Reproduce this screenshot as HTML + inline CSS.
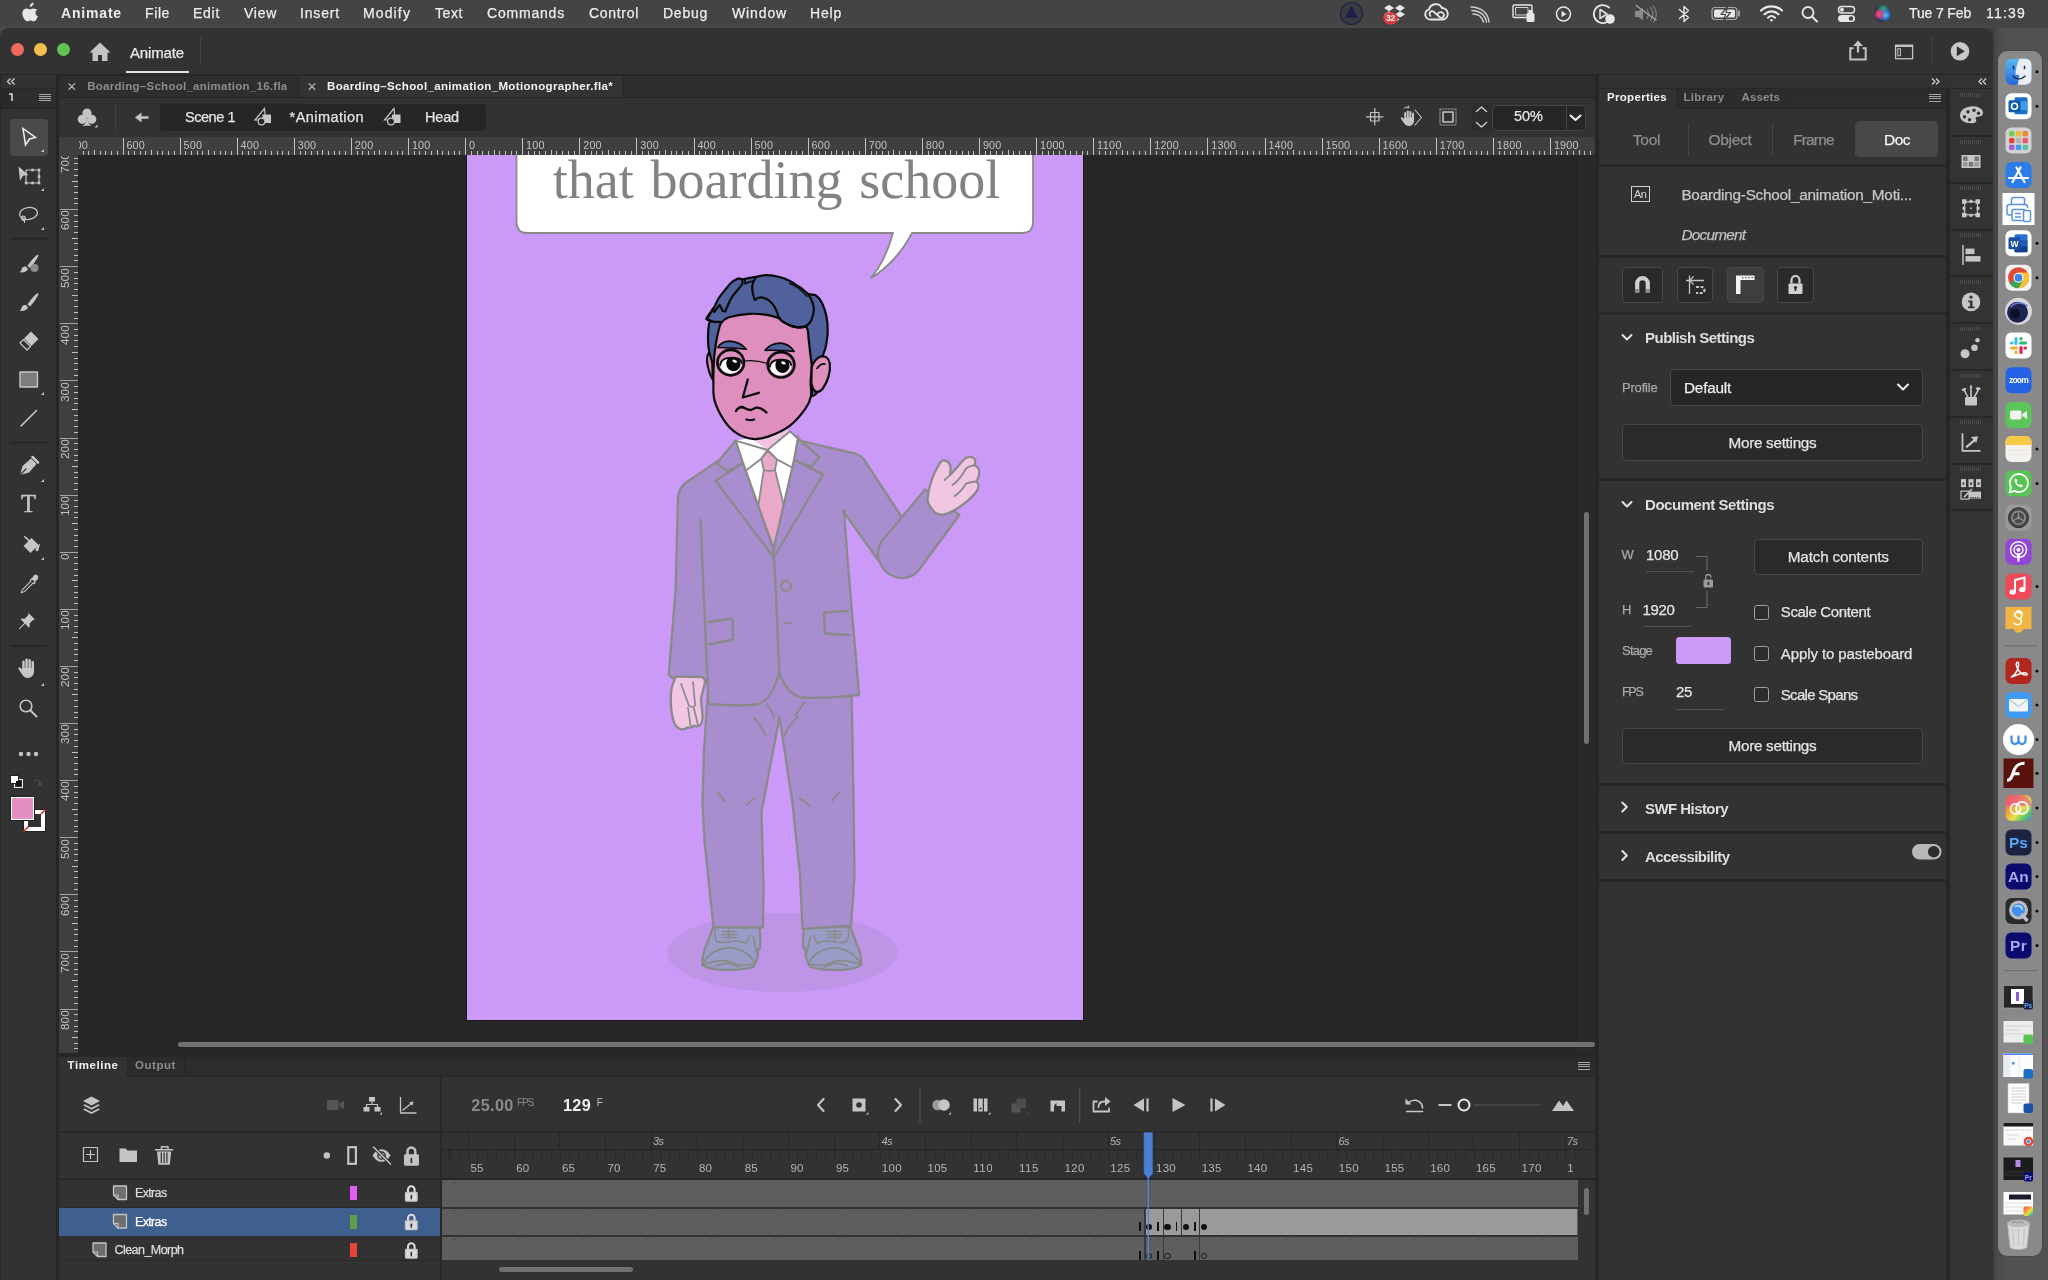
<!DOCTYPE html>
<html lang="en"><head><meta charset="utf-8"><title>Animate</title>
<style>
html,body{margin:0;padding:0;background:#484848;}
body{width:2048px;height:1280px;position:relative;overflow:hidden;font-family:"Liberation Sans",sans-serif;}
#root{position:absolute;left:0;top:0;width:2048px;height:1280px;will-change:transform;}
.b,.t,svg.a{position:absolute;}
.b{box-sizing:border-box;}
.t{white-space:nowrap;}
svg{overflow:visible;}
</style></head>
<body>
<div id="root">
<!-- p_frame -->
<div class="b" style="left:1985px;top:28px;width:63px;height:1252px;background:linear-gradient(90deg,#3e3e3e 8px,#4a4a4a 12px,#515151 20px);"></div>
<div class="b" style="left:0px;top:28px;width:1993px;height:1252px;background:#323232;border-radius:9px 9px 0 0;"></div>
<div class="b" style="left:0px;top:74px;width:1993px;height:1px;background:#262626;"></div>
<!-- p_menubar -->
<div class="b" style="left:0px;top:0px;width:2048px;height:28px;background:#444444;"></div>
<div class="b" style="left:0px;top:27px;width:2048px;height:1px;background:#494949;"></div>
<svg class="a" style="left:21px;top:2px" width="18" height="22" viewBox="0 0 18 22"><path fill="#e6e6e6" d="M12.6 0.6c0.1 1.1-0.3 2.2-1 3-0.7 0.8-1.7 1.4-2.8 1.3-0.1-1.1 0.4-2.2 1-2.9 0.7-0.8 1.9-1.4 2.8-1.4zM16.4 7.4c-1.2 0.7-1.9 1.9-1.9 3.3 0 1.6 0.9 3 2.4 3.6-0.3 0.9-0.7 1.8-1.3 2.6-0.8 1.2-1.7 2.4-3 2.4-1.3 0-1.7-0.8-3.2-0.8-1.5 0-2 0.8-3.2 0.8-1.3 0-2.2-1.1-3-2.3C1.5 14.600 0.600 11.200 2 8.800c0.800-1.400 2.200-2.200 3.700-2.200 1.300 0 2.400 0.800 3.200 0.800 0.700 0 2.100-1 3.700-0.900 1.500 0.050 2.900 0.700 3.800 1.900z"/></svg>
<span class="t" style="left:61.0px;top:6.3px;font-size:14px;line-height:14px;color:#ececec;letter-spacing:0.82px;font-weight:bold;">Animate</span>
<span class="t" style="left:145.0px;top:6.3px;font-size:14px;line-height:14px;color:#ececec;letter-spacing:0.61px;-webkit-text-stroke:0.250px;">File</span>
<span class="t" style="left:193.0px;top:6.3px;font-size:14px;line-height:14px;color:#ececec;letter-spacing:0.72px;-webkit-text-stroke:0.250px;">Edit</span>
<span class="t" style="left:244.0px;top:6.3px;font-size:14px;line-height:14px;color:#ececec;letter-spacing:0.73px;-webkit-text-stroke:0.250px;">View</span>
<span class="t" style="left:300.0px;top:6.3px;font-size:14px;line-height:14px;color:#ececec;letter-spacing:0.83px;-webkit-text-stroke:0.250px;">Insert</span>
<span class="t" style="left:363.0px;top:6.3px;font-size:14px;line-height:14px;color:#ececec;letter-spacing:1.13px;-webkit-text-stroke:0.250px;">Modify</span>
<span class="t" style="left:435.0px;top:6.3px;font-size:14px;line-height:14px;color:#ececec;letter-spacing:0.58px;-webkit-text-stroke:0.250px;">Text</span>
<span class="t" style="left:487.0px;top:6.3px;font-size:14px;line-height:14px;color:#ececec;letter-spacing:0.80px;-webkit-text-stroke:0.250px;">Commands</span>
<span class="t" style="left:589.0px;top:6.3px;font-size:14px;line-height:14px;color:#ececec;letter-spacing:0.70px;-webkit-text-stroke:0.250px;">Control</span>
<span class="t" style="left:663.0px;top:6.3px;font-size:14px;line-height:14px;color:#ececec;letter-spacing:0.75px;-webkit-text-stroke:0.250px;">Debug</span>
<span class="t" style="left:732.0px;top:6.3px;font-size:14px;line-height:14px;color:#ececec;letter-spacing:0.87px;-webkit-text-stroke:0.250px;">Window</span>
<span class="t" style="left:810.0px;top:6.3px;font-size:14px;line-height:14px;color:#ececec;letter-spacing:0.80px;-webkit-text-stroke:0.250px;">Help</span>
<span class="t" style="left:1909.0px;top:6.3px;font-size:14px;line-height:14px;color:#ececec;letter-spacing:-0.14px;-webkit-text-stroke:0.250px;">Tue 7 Feb</span>
<span class="t" style="left:1986.0px;top:6.3px;font-size:14px;line-height:14px;color:#ececec;letter-spacing:1.20px;-webkit-text-stroke:0.250px;">11:39</span>
<svg class="a" style="left:1330px;top:0" width="580" height="28" viewBox="1330 0 580 28" fill="none" stroke="#e6e6e6" stroke-width="1.6" stroke-linecap="round" stroke-linejoin="round">
<circle cx="1351.500" cy="13.500" r="11" stroke="#1f2440" stroke-width="1.2" fill="#3a3a44"/><path d="M1351.500 5.500l6.500 12.500h-13z" fill="#1c2145" stroke="none"/>
<g fill="#e8e8e8" stroke="none"><path d="M1389 4.800l5 3.200-5 3.200-5-3.200zM1400 4.800l5 3.200-5 3.200-5-3.200zM1400 11.200l5 3.200-5 3.200-5-3.200zM1394.500 16.300l5 3.200-5 3.200-5-3.200zM1389 11.200l5 3.200-5 3.200-5-3.200z"/></g>
<ellipse cx="1390.600" cy="18.300" rx="7.300" ry="6.300" fill="#e0383e" stroke="none"/>
<path d="M1436.500 19.500h-6a5.200 5.200 0 0 1-1.500-10.200a7 7 0 0 1 13-1.300a5.800 5.800 0 0 1 1 11.500z" stroke-width="1.900"/><path d="M1430.500 16c-2.500-2.500 0.500-6.500 3.500-4l5.500 5c3 2.500 6-1.500 3.500-4c-2-2-5-0.500-5.500 1.500" stroke-width="1.700"/>
<path d="M1471 7c9 0 17 5 18 15M1472 10.500c7 0 13 4 14.500 11.500M1473 14c5 0 9 3 10.500 8" stroke-width="1.500" stroke="#cfcfcf"/>
<rect x="1513" y="5" width="19" height="12.500" rx="1.500" stroke-width="1.400"/><rect x="1516" y="7.500" width="12" height="7.500" stroke-width="1" stroke="#cfcfcf"/><rect x="1526.500" y="13" width="8" height="9" rx="1.500" fill="#e6e6e6" stroke="none"/><rect x="1528.500" y="10" width="4" height="4" fill="#e6e6e6" stroke="none"/>
<circle cx="1563.500" cy="14" r="7" stroke-width="1.500"/><path d="M1561.500 10.800l5 3.200-5 3.200z" fill="#e6e6e6" stroke="none"/>
<path d="M1609 7.500a9 9 0 1 0 2.500 9" stroke-width="1.800"/><path d="M1600 9.500l7 4.500-7 4.500z" stroke-width="1.500"/><circle cx="1610" cy="19" r="4.800" fill="#e6e6e6" stroke="none"/>
<g stroke="#8a8a8a" fill="#8a8a8a"><path d="M1635 11h3.500l4.500-3.500v13l-4.500-3.500h-3.500z" stroke="none"/><path d="M1647 9.500c2 2.500 2 6.500 0 9M1650.500 7.500c3 4 3 9 0 13M1653.500 6c3.500 5 3.500 11 0 16" fill="none" stroke-width="1.100"/><path d="M1636 5.500l20 14.500" stroke-width="1.300" stroke="#a8a8a8"/></g>
<path d="M1679.500 9.500l9 8-4.500 4v-15l4.500 4-9 8" stroke-width="1.400"/>
<rect x="1712" y="7.500" width="25" height="12" rx="3" stroke-width="1.200" stroke="#a9a9a9"/><rect x="1714" y="9.500" width="21" height="8" rx="1.500" fill="#e6e6e6" stroke="none"/><path d="M1739 11.500v4" stroke="#a9a9a9" stroke-width="1.800"/><path d="M1727.500 6.500l-6.500 8h4.500l-2 6.500 7-8.500h-4.500z" fill="#e6e6e6" stroke="#444444" stroke-width="1.200"/>
<path d="M1761 10.500c6-5.500 15-5.500 21 0" stroke-width="2.200"/><path d="M1764.500 14.200c4-3.800 10-3.800 14 0" stroke-width="2.200"/><path d="M1768 17.700c2-2 5-2 7 0" stroke-width="2.200"/><circle cx="1771.500" cy="20.300" r="1.300" fill="#e6e6e6" stroke="none"/>
<circle cx="1808" cy="12.500" r="5.500" stroke-width="1.800"/><path d="M1812 16.500l5 5" stroke-width="2"/>
<rect x="1838.500" y="6.500" width="16" height="6.500" rx="3.250" stroke-width="1.500"/><circle cx="1842" cy="9.750" r="2" fill="#e6e6e6" stroke="none"/><rect x="1838" y="15" width="17" height="7" rx="3.500" fill="#e6e6e6" stroke="none"/><circle cx="1851" cy="18.500" r="2.200" fill="#444444" stroke="none"/>
</svg>
<span class="t" style="left:1385.9px;top:14.1px;font-size:8.5px;line-height:8.5px;color:#fff;font-weight:bold;">32</span>
<div class="b" style="left:1873.5px;top:5px;width:17px;height:17px;background:radial-gradient(circle at 30% 55%,#ff4f7a 0,rgba(220,60,110,0.800) 18%,rgba(0,0,0,0) 40%),radial-gradient(circle at 68% 60%,#58c8f0 0,rgba(60,130,230,0.800) 22%,rgba(0,0,0,0) 48%),radial-gradient(circle at 55% 22%,#3fae86 0,rgba(40,140,110,0.700) 20%,rgba(0,0,0,0) 45%),radial-gradient(circle at 50% 50%,#e8e8ff 0,#6a5ab0 20%,#2a2d4a 60%,#1d1f2c 100%);border-radius:50%;"></div>
<!-- p_titlebar -->
<div class="b" style="left:10.5px;top:42.5px;width:13px;height:13px;background:#ec6a5e;border-radius:50%;"></div>
<div class="b" style="left:33.5px;top:42.5px;width:13px;height:13px;background:#f4bf4f;border-radius:50%;"></div>
<div class="b" style="left:56.5px;top:42.5px;width:13px;height:13px;background:#61c554;border-radius:50%;"></div>
<svg class="a" style="left:89px;top:42px" width="22" height="20" viewBox="0 0 22 20"><path fill="#c4c4c4" d="M11 0.500L0.500 10.500h3v8.500h5.500v-6h4v6h5.500v-8.500h3z"/></svg>
<span class="t" style="left:130.0px;top:45.3px;font-size:15px;line-height:15px;color:#e8e8e8;letter-spacing:-0.15px;-webkit-text-stroke:0.250px;">Animate</span>
<div class="b" style="left:126px;top:70.5px;width:63px;height:2px;background:#e0e0e0;"></div>
<div class="b" style="left:200px;top:37px;width:1px;height:26px;background:#454545;"></div>
<svg class="a" style="left:1840px;top:36px" width="140" height="32" viewBox="1840 36 140 32" fill="none" stroke="#c4c4c4">
<path d="M1853.500 48.300h-3.200v11.200h15.400v-11.200h-3.200" stroke-width="2"/><path d="M1858 52.500v-9" stroke-width="2.200"/><path d="M1858 40.500l5 5.500h-10z" fill="#c4c4c4" stroke="none"/>
<rect x="1895.600" y="45.200" width="17" height="13.500" stroke-width="1.300"/><path d="M1895 46h18" stroke-width="2"/><rect x="1897.800" y="48.800" width="2.600" height="7" stroke-width="1"/>
<path d="M1932 37v26" stroke="#454545" stroke-width="1"/>
<circle cx="1960" cy="51.300" r="9.300" fill="#c8c8c8" stroke="none"/><path d="M1956.800 46.300l8 5-8 5z" fill="#323232" stroke="none"/>
</svg>
<!-- p_tools -->
<div class="b" style="left:0px;top:75px;width:1px;height:1205px;background:#262626;"></div>
<div class="b" style="left:56px;top:75px;width:3px;height:1205px;background:#262626;"></div>
<div class="b" style="left:1px;top:87.5px;width:55px;height:1.5px;background:#282828;"></div>
<div class="b" style="left:1px;top:107px;width:55px;height:1.5px;background:#282828;"></div>
<div class="b" style="left:1px;top:89px;width:55px;height:18px;background:#2e2e2e;"></div>
<div class="b" style="left:1px;top:89px;width:12.5px;height:18px;background:#2a2a2a;"></div>
<svg class="a" style="left:0;top:75px" width="58" height="36" viewBox="0 75 58 36" fill="none" stroke="#d0d0d0" stroke-width="1.300">
<path d="M10.500 78.500l-3 3 3 3M14.500 78.500l-3 3 3 3"/>
<path d="M9 94h3v7" stroke="#e0e0e0" stroke-width="1.500"/>
<path d="M39 94.500h11.500M39 96.500h11.500M39 98.500h11.500M39 100.500h11.500" stroke="#a6a6a6" stroke-width="1" shape-rendering="crispEdges"/>
</svg>
<div class="b" style="left:10px;top:119px;width:37.5px;height:36.5px;background:#4a4a4a;border-radius:4px;"></div>
<svg class="a" style="left:0;top:110px" width="58" height="740" viewBox="0 110 58 740" fill="none" stroke="#c6c6c6" stroke-width="1.500" stroke-linejoin="round" stroke-linecap="round">
<path d="M23 128.500l12.500 9-6 1.500-4 6z" stroke="#f2f2f2" stroke-width="1.500" stroke-linejoin="miter"/>
<path d="M41 152l3-3v3z" fill="#c6c6c6" stroke="none"/>
<path d="M18.500 166.500l10 8.500-5.500 0.800-3 5z" fill="#c6c6c6" stroke="none"/><rect x="26" y="170" width="13" height="13" stroke-width="1.200" stroke-dasharray="0"/><g fill="#c6c6c6" stroke="none"><rect x="24.800" y="181.700" width="2.600" height="2.600"/><rect x="37.700" y="181.700" width="2.600" height="2.600"/><rect x="37.700" y="168.700" width="2.600" height="2.600"/><rect x="31.200" y="181.700" width="2.600" height="2.600"/><rect x="37.700" y="175.200" width="2.600" height="2.600"/><rect x="31.200" y="168.700" width="2.600" height="2.600"/></g>
<path d="M41 191l3-3v3z" fill="#c6c6c6" stroke="none"/>
<ellipse cx="28.500" cy="213.500" rx="9" ry="6" transform="rotate(-8 28.500 213.500)" stroke-width="1.300"/><path d="M21 217.500c2-2.500 5-1 4 1.500s-4 1-3-1c1.500-1 3 2 2.500 4.500" stroke-width="1.200"/>
<path d="M41 230l3-3v3z" fill="#c6c6c6" stroke="none"/>
<path d="M11 238.500h35" stroke="#262626" stroke-width="2"/>
<path d="M37.500 254.500c-3 2-8 8-10 11.500l2.500 2c3-3 7-9 8.500-12.500z" fill="#c6c6c6" stroke="none"/><path d="M26.500 267c-2-1.200-4.500 0-5 2.500-0.300 1.500-1 2-2 2.500 3 1 7.500 0 8.500-3z" fill="#c6c6c6" stroke="none"/><circle cx="34.500" cy="268" r="4" fill="#8c8c8c" stroke="none"/>
<path d="M37.500 293c-3 2-8 8-10 11.500l2.500 2c3-3 7-9 8.500-12.500z" fill="#c6c6c6" stroke="none"/><path d="M26.500 305.500c-2-1.200-4.500 0-5 2.500-0.300 1.500-1 2-2 2.500 3 1 7.500 0 8.500-3z" fill="#c6c6c6" stroke="none"/>
<path d="M31 331.500l7.500 7.500-7 7-7.500-7.500z" fill="#c6c6c6" stroke="none"/><path d="M23.500 339.500l7 7-3.500 3.500-7-7z" stroke-width="1.200"/>
<rect x="20" y="372" width="17.500" height="15" fill="#7d7d7d" stroke="#c6c6c6" stroke-width="1.400"/>
<path d="M41 395l3-3v3z" fill="#c6c6c6" stroke="none"/>
<path d="M21 426l15.500-15.500" stroke-width="1.600"/>
<path d="M11 442.500h35" stroke="#262626" stroke-width="2"/>
<path d="M31 458.500l5.500 5.500-7.500 8.500-9 2.500 2.500-9z" fill="#c6c6c6" stroke="none"/><path d="M20 475l6-6" stroke="#323232" stroke-width="1.200"/><path d="M32.500 457l5.500 5.500" stroke-width="2.500"/>
<path d="M41 482l3-3v3z" fill="#c6c6c6" stroke="none"/>
<path d="M41 560l3-3v3z" fill="#c6c6c6" stroke="none"/>
<g transform="translate(-1 7)"><path d="M24.500 539l8-8 7 7-8 8z" fill="#c6c6c6" stroke="none"/><path d="M27 531l6 5" stroke-width="1.300"/><path d="M25.500 529.500l4 3.500" stroke-width="1.200"/><path d="M20.500 540.500c0-2 2.500-5 4.500-5.500l-1.500 6c-0.500 2-3 1.500-3-0.500z" fill="#c6c6c6" stroke="none" transform="translate(16 2)"/></g>
<path d="M34.500 575.500a2.200 2.200 0 0 1 3 3l-3 3 0.800 0.800-1.300 1.300-0.800-0.800-9 9-3 1 1-3 9-9-0.800-0.800 1.300-1.300 0.800 0.800z" stroke-width="1.100"/><path d="M34.500 575.500a2.200 2.200 0 0 1 3 3l-3 3-3-3z" fill="#c6c6c6" stroke="none"/>
<path d="M28.500 613l6.500 6.500-2 0.500-3.500 3.500 0.300 3-1 1-3.700-3.700-5.500 5.500-0.700-0.700 5.500-5.500-3.700-3.700 1-1 3 0.300 3.500-3.500z" fill="#c6c6c6" stroke="none"/>
<path d="M11 646h35" stroke="#262626" stroke-width="2"/>
<g transform="translate(28 668)" fill="#c6c6c6" stroke="none"><rect x="-5.800" y="-7.500" width="2.500" height="10" rx="1.250"/><rect x="-2.700" y="-9.500" width="2.500" height="12" rx="1.250"/><rect x="0.400" y="-9" width="2.500" height="12" rx="1.250"/><rect x="3.500" y="-7" width="2.500" height="10" rx="1.250"/><path d="M-5.800 0h11.800v3c0 4-2.500 7-6 7-3 0-4.500-1.500-6.500-4.500l-3-4.500c-0.800-1.500 1-2.500 2-1.300l1.700 2z"/></g>
<path d="M41 686l3-3v3z" fill="#c6c6c6" stroke="none"/>
<circle cx="26" cy="706" r="5.800" stroke-width="1.600"/><path d="M30.500 710.500l6 6" stroke-width="2"/>
<circle cx="21" cy="754" r="2.200" fill="#c6c6c6" stroke="none"/><circle cx="28.500" cy="754" r="2.200" fill="#c6c6c6" stroke="none"/><circle cx="36" cy="754" r="2.200" fill="#c6c6c6" stroke="none"/>
</svg>
<span class="t" style="left:21.0px;top:491.8px;font-size:24.5px;line-height:24.5px;color:#c6c6c6;font-family:'Liberation Serif',serif;-webkit-text-stroke:0.500px #c6c6c6;">T</span>
<svg class="a" style="left:8px;top:772px" width="42" height="62" viewBox="8 772 42 62">
<rect x="14.500" y="779.500" width="8" height="8" fill="#323232" stroke="#e8e8e8" stroke-width="1"/><rect x="10.500" y="775.500" width="8" height="8" fill="#fff" stroke="#222" stroke-width="1"/><rect x="16" y="781" width="5" height="5" fill="#111"/>
<path d="M34 782c1.500-3 5-3 6 0v3M38 783.500l2 2 2-2" fill="none" stroke="#4d4d4d" stroke-width="1.200"/>
<rect x="23.500" y="809.500" width="22" height="22" fill="#fff" stroke="#222" stroke-width="1"/><rect x="28" y="814" width="13" height="13" fill="#323232"/><path d="M23.500 831.500l5-5M41 814l4.500-4.500" stroke="#e0302a" stroke-width="1.600"/>
<rect x="11.500" y="797.500" width="22" height="22" fill="#e290c2" stroke="#fff" stroke-width="1"/><rect x="10.500" y="796.500" width="24" height="24" fill="none" stroke="#222" stroke-width="1"/>
</svg>
<!-- p_doc -->
<div class="b" style="left:1595px;top:75px;width:4px;height:1205px;background:#262626;"></div>
<div class="b" style="left:59px;top:75px;width:1536px;height:23px;background:#2e2e2e;"></div>
<div class="b" style="left:59px;top:75px;width:1536px;height:1px;background:#262626;"></div>
<div class="b" style="left:59px;top:76px;width:239px;height:21px;background:#2e2e2e;"></div>
<div class="b" style="left:299px;top:76px;width:324px;height:21px;background:#333333;"></div>
<div class="b" style="left:298px;top:76px;width:1px;height:21px;background:#262626;"></div>
<div class="b" style="left:623px;top:76px;width:1px;height:21px;background:#262626;"></div>
<div class="b" style="left:59px;top:97px;width:1536px;height:1px;background:#262626;"></div>
<svg class="a" style="left:60px;top:76px" width="270" height="21" viewBox="60 76 270 21" fill="none" stroke="#bdbdbd" stroke-width="1.200"><path d="M68.500 83.300l6.600 6.600M75.100 83.300l-6.600 6.600M308.700 83.300l6.600 6.600M315.300 83.300l-6.600 6.600"/></svg>
<span class="t" style="left:87.2px;top:80.6px;font-size:11.5px;line-height:11.5px;color:#8c8c8c;letter-spacing:0.27px;font-weight:bold;">Boarding–School_animation_16.fla</span>
<span class="t" style="left:327.0px;top:80.6px;font-size:11.5px;line-height:11.5px;color:#f2f2f2;letter-spacing:0.35px;font-weight:bold;">Boarding–School_animation_Motionographer.fla*</span>
<div class="b" style="left:160px;top:104px;width:326px;height:27px;background:#262626;border-radius:4px;"></div>
<div class="b" style="left:114.5px;top:105px;width:1px;height:25px;background:#444;"></div>
<svg class="a" style="left:70px;top:100px" width="420" height="36" viewBox="70 100 420 36" fill="#c4c4c4" stroke="none">
<circle cx="87" cy="113.200" r="4.600"/><circle cx="82.300" cy="119.300" r="4.600"/><circle cx="91.700" cy="119.300" r="4.600"/><path d="M87 116c0 5-1.500 8-4.500 9.800h9c-3-1.800-4.500-4.800-4.500-9.800z"/><path d="M94.500 127.500l3-3v3z"/>
<path d="M135 117.500l6.500-5v3.700h7v2.600h-7v3.700z"/>
<g id="symic"><rect x="262.500" y="114.500" width="8.500" height="8.500" fill="#c8c8c8"/><path d="M264.500 108.500l-9.500 11.500h10.500z" fill="none" stroke="#c4c4c4" stroke-width="1.200"/><circle cx="261.500" cy="121.500" r="3.400" fill="#262626" stroke="#c4c4c4" stroke-width="1.200"/></g>
<use href="#symic" x="129.500"/>
</svg>
<span class="t" style="left:185.0px;top:109.7px;font-size:14.5px;line-height:14.5px;color:#e4e4e4;letter-spacing:-0.46px;-webkit-text-stroke:0.250px;">Scene 1</span>
<span class="t" style="left:289.6px;top:109.7px;font-size:14.5px;line-height:14.5px;color:#e4e4e4;letter-spacing:0.43px;-webkit-text-stroke:0.250px;">*Animation</span>
<span class="t" style="left:425.0px;top:109.7px;font-size:14.5px;line-height:14.5px;color:#e4e4e4;letter-spacing:-0.17px;-webkit-text-stroke:0.250px;">Head</span>
<div class="b" style="left:1472px;top:104.5px;width:22px;height:26px;background:#2c2c2c;border-radius:4px 0 0 4px;"></div>
<div class="b" style="left:1491.5px;top:104.5px;width:94px;height:26px;background:#262626;border:1px solid #444;border-radius:4px;"></div>
<div class="b" style="left:1566px;top:105px;width:1px;height:25px;background:#444;"></div>
<span class="t" style="left:1514.0px;top:109.2px;font-size:14.5px;line-height:14.5px;color:#e4e4e4;letter-spacing:-0.01px;-webkit-text-stroke:0.250px;">50%</span>
<svg class="a" style="left:1360px;top:100px" width="230" height="36" viewBox="1360 100 230 36" fill="none" stroke="#c4c4c4" stroke-width="1.200" stroke-linecap="round" stroke-linejoin="round">
<rect x="1370.500" y="112.500" width="8.500" height="8.500"/><path d="M1374.800 108.500v16.500M1366.500 116.800h16.500"/>
<g transform="translate(1409 117.500)" fill="#c4c4c4" stroke="none"><rect x="-4.800" y="-5.500" width="2" height="8" rx="1"/><rect x="-2.200" y="-7" width="2" height="9.500" rx="1"/><rect x="0.400" y="-6.500" width="2" height="9" rx="1"/><rect x="3" y="-5" width="2" height="8" rx="1"/><path d="M-4.800 0h9.800v3c0 3-2 5.500-5 5.500-2.500 0-3.800-1-5.500-3.500l-2.500-3.800c-0.600-1.200 0.800-2 1.700-1l1.500 1.700z"/></g>
<path d="M1415 110l6.500 7.500-6.500 7.500" stroke-width="1.100"/><path d="M1404 108.500c1-1.500 3-2 4.500-1M1408.800 105.800v2h-2" stroke-width="1"/>
<rect x="1443" y="112" width="10" height="10" stroke-width="1.600"/><rect x="1440" y="109" width="16" height="16" stroke-width="1" stroke-dasharray="1.500 1.200" stroke="#9a9a9a"/>
<path d="M1476.500 111.500l5-4.500 5 4.500M1476.500 122.500l5 4.500 5-4.500" stroke-width="1.600"/>
<path d="M1570.500 115.500l5 4.500 5-4.500" stroke="#f0f0f0" stroke-width="2"/>
</svg>
<div class="b" style="left:59px;top:137px;width:1536px;height:18px;background:#3f3f3f;"></div>
<div class="b" style="left:59px;top:155px;width:19px;height:898px;background:#3f3f3f;"></div>
<svg class="a" style="left:0;top:0" width="1600" height="160" viewBox="0 0 1600 160" shape-rendering="crispEdges"><path d="M83.5 155v-4M88.5 155v-4M94.5 155v-5.500M100.5 155v-4M105.5 155v-4M111.5 155v-4M117.5 155v-4M128.5 155v-4M134.5 155v-4M140.5 155v-4M145.5 155v-4M151.5 155v-5.500M157.5 155v-4M162.5 155v-4M168.5 155v-4M174.5 155v-4M185.5 155v-4M191.5 155v-4M197.5 155v-4M202.5 155v-4M208.5 155v-5.500M214.5 155v-4M220.5 155v-4M225.5 155v-4M231.5 155v-4M242.5 155v-4M248.5 155v-4M254.5 155v-4M260.5 155v-4M265.5 155v-5.500M271.5 155v-4M277.5 155v-4M282.5 155v-4M288.5 155v-4M300.5 155v-4M305.5 155v-4M311.5 155v-4M317.5 155v-4M322.5 155v-5.500M328.5 155v-4M334.5 155v-4M339.5 155v-4M345.5 155v-4M357.5 155v-4M362.5 155v-4M368.5 155v-4M374.5 155v-4M379.5 155v-5.500M385.5 155v-4M391.5 155v-4M397.5 155v-4M402.5 155v-4M414.5 155v-4M419.5 155v-4M425.5 155v-4M431.5 155v-4M437.5 155v-5.500M442.5 155v-4M448.5 155v-4M454.5 155v-4M459.5 155v-4M471.5 155v-4M477.5 155v-4M482.5 155v-4M488.5 155v-4M494.5 155v-5.500M499.5 155v-4M505.5 155v-4M511.5 155v-4M516.5 155v-4M528.5 155v-4M534.5 155v-4M539.5 155v-4M545.5 155v-4M551.5 155v-5.500M556.5 155v-4M562.5 155v-4M568.5 155v-4M574.5 155v-4M585.5 155v-4M591.5 155v-4M596.5 155v-4M602.5 155v-4M608.5 155v-5.500M614.5 155v-4M619.5 155v-4M625.5 155v-4M631.5 155v-4M642.5 155v-4M648.5 155v-4M654.5 155v-4M659.5 155v-4M665.5 155v-5.500M671.5 155v-4M676.5 155v-4M682.5 155v-4M688.5 155v-4M699.5 155v-4M705.5 155v-4M711.5 155v-4M716.5 155v-4M722.5 155v-5.500M728.5 155v-4M733.5 155v-4M739.5 155v-4M745.5 155v-4M756.5 155v-4M762.5 155v-4M768.5 155v-4M773.5 155v-4M779.5 155v-5.500M785.5 155v-4M791.5 155v-4M796.5 155v-4M802.5 155v-4M813.5 155v-4M819.5 155v-4M825.5 155v-4M831.5 155v-4M836.5 155v-5.500M842.5 155v-4M848.5 155v-4M853.5 155v-4M859.5 155v-4M871.5 155v-4M876.5 155v-4M882.5 155v-4M888.5 155v-4M893.5 155v-5.500M899.5 155v-4M905.5 155v-4M910.5 155v-4M916.5 155v-4M928.5 155v-4M933.5 155v-4M939.5 155v-4M945.5 155v-4M950.5 155v-5.500M956.5 155v-4M962.5 155v-4M968.5 155v-4M973.5 155v-4M985.5 155v-4M990.5 155v-4M996.5 155v-4M1002.5 155v-4M1008.5 155v-5.500M1013.5 155v-4M1019.5 155v-4M1025.5 155v-4M1030.5 155v-4M1042.5 155v-4M1048.5 155v-4M1053.5 155v-4M1059.5 155v-4M1065.5 155v-5.500M1070.5 155v-4M1076.5 155v-4M1082.5 155v-4M1087.5 155v-4M1099.5 155v-4M1105.5 155v-4M1110.5 155v-4M1116.5 155v-4M1122.5 155v-5.500M1127.5 155v-4M1133.5 155v-4M1139.5 155v-4M1145.5 155v-4M1156.5 155v-4M1162.5 155v-4M1167.5 155v-4M1173.5 155v-4M1179.5 155v-5.500M1185.5 155v-4M1190.5 155v-4M1196.5 155v-4M1202.5 155v-4M1213.5 155v-4M1219.5 155v-4M1225.5 155v-4M1230.5 155v-4M1236.5 155v-5.500M1242.5 155v-4M1247.5 155v-4M1253.5 155v-4M1259.5 155v-4M1270.5 155v-4M1276.5 155v-4M1282.5 155v-4M1287.5 155v-4M1293.5 155v-5.500M1299.5 155v-4M1304.5 155v-4M1310.5 155v-4M1316.5 155v-4M1327.5 155v-4M1333.5 155v-4M1339.5 155v-4M1344.5 155v-4M1350.5 155v-5.500M1356.5 155v-4M1362.5 155v-4M1367.5 155v-4M1373.5 155v-4M1384.5 155v-4M1390.5 155v-4M1396.5 155v-4M1402.5 155v-4M1407.5 155v-5.500M1413.5 155v-4M1419.5 155v-4M1424.5 155v-4M1430.5 155v-4M1442.5 155v-4M1447.5 155v-4M1453.5 155v-4M1459.5 155v-4M1464.5 155v-5.500M1470.5 155v-4M1476.5 155v-4M1481.5 155v-4M1487.5 155v-4M1499.5 155v-4M1504.5 155v-4M1510.5 155v-4M1516.5 155v-4M1521.5 155v-5.500M1527.5 155v-4M1533.5 155v-4M1539.5 155v-4M1544.5 155v-4M1556.5 155v-4M1561.5 155v-4M1567.5 155v-4M1573.5 155v-4M1579.5 155v-5.500M1584.5 155v-4M1590.5 155v-4" stroke="#c2c2c2" stroke-width="1" fill="none"/></svg>
<div class="b" style="left:79px;top:137px;width:40px;height:18px;overflow:hidden"><span class="t" style="left:-9.7px;top:2.8px;font-size:10.8px;line-height:10.8px;color:#c2c2c2;letter-spacing:0.19px;">700</span></div>
<div class="b" style="left:122.7px;top:138px;width:1.5px;height:17px;background:#c2c2c2;"></div>
<span class="t" style="left:126.4px;top:139.8px;font-size:10.8px;line-height:10.8px;color:#c2c2c2;letter-spacing:0.19px;">600</span>
<div class="b" style="left:179.7px;top:138px;width:1.5px;height:17px;background:#c2c2c2;"></div>
<span class="t" style="left:183.5px;top:139.8px;font-size:10.8px;line-height:10.8px;color:#c2c2c2;letter-spacing:0.19px;">500</span>
<div class="b" style="left:236.7px;top:138px;width:1.5px;height:17px;background:#c2c2c2;"></div>
<span class="t" style="left:240.6px;top:139.8px;font-size:10.8px;line-height:10.8px;color:#c2c2c2;letter-spacing:0.19px;">400</span>
<div class="b" style="left:293.7px;top:138px;width:1.5px;height:17px;background:#c2c2c2;"></div>
<span class="t" style="left:297.7px;top:139.8px;font-size:10.8px;line-height:10.8px;color:#c2c2c2;letter-spacing:0.19px;">300</span>
<div class="b" style="left:350.7px;top:138px;width:1.5px;height:17px;background:#c2c2c2;"></div>
<span class="t" style="left:354.8px;top:139.8px;font-size:10.8px;line-height:10.8px;color:#c2c2c2;letter-spacing:0.19px;">200</span>
<div class="b" style="left:407.7px;top:138px;width:1.5px;height:17px;background:#c2c2c2;"></div>
<span class="t" style="left:411.9px;top:139.8px;font-size:10.8px;line-height:10.8px;color:#c2c2c2;letter-spacing:0.19px;">100</span>
<div class="b" style="left:464.7px;top:138px;width:1.5px;height:17px;background:#c2c2c2;"></div>
<span class="t" style="left:469.0px;top:139.8px;font-size:10.8px;line-height:10.8px;color:#c2c2c2;">0</span>
<div class="b" style="left:521.7px;top:138px;width:1.5px;height:17px;background:#c2c2c2;"></div>
<span class="t" style="left:526.1px;top:139.8px;font-size:10.8px;line-height:10.8px;color:#c2c2c2;letter-spacing:0.19px;">100</span>
<div class="b" style="left:578.7px;top:138px;width:1.5px;height:17px;background:#c2c2c2;"></div>
<span class="t" style="left:583.2px;top:139.8px;font-size:10.8px;line-height:10.8px;color:#c2c2c2;letter-spacing:0.19px;">200</span>
<div class="b" style="left:635.7px;top:138px;width:1.5px;height:17px;background:#c2c2c2;"></div>
<span class="t" style="left:640.3px;top:139.8px;font-size:10.8px;line-height:10.8px;color:#c2c2c2;letter-spacing:0.19px;">300</span>
<div class="b" style="left:693.7px;top:138px;width:1.5px;height:17px;background:#c2c2c2;"></div>
<span class="t" style="left:697.4px;top:139.8px;font-size:10.8px;line-height:10.8px;color:#c2c2c2;letter-spacing:0.19px;">400</span>
<div class="b" style="left:750.7px;top:138px;width:1.5px;height:17px;background:#c2c2c2;"></div>
<span class="t" style="left:754.5px;top:139.8px;font-size:10.8px;line-height:10.8px;color:#c2c2c2;letter-spacing:0.19px;">500</span>
<div class="b" style="left:807.7px;top:138px;width:1.5px;height:17px;background:#c2c2c2;"></div>
<span class="t" style="left:811.6px;top:139.8px;font-size:10.8px;line-height:10.8px;color:#c2c2c2;letter-spacing:0.19px;">600</span>
<div class="b" style="left:864.7px;top:138px;width:1.5px;height:17px;background:#c2c2c2;"></div>
<span class="t" style="left:868.7px;top:139.8px;font-size:10.8px;line-height:10.8px;color:#c2c2c2;letter-spacing:0.19px;">700</span>
<div class="b" style="left:921.7px;top:138px;width:1.5px;height:17px;background:#c2c2c2;"></div>
<span class="t" style="left:925.8px;top:139.8px;font-size:10.8px;line-height:10.8px;color:#c2c2c2;letter-spacing:0.19px;">800</span>
<div class="b" style="left:978.7px;top:138px;width:1.5px;height:17px;background:#c2c2c2;"></div>
<span class="t" style="left:982.9px;top:139.8px;font-size:10.8px;line-height:10.8px;color:#c2c2c2;letter-spacing:0.19px;">900</span>
<div class="b" style="left:1035.7px;top:138px;width:1.5px;height:17px;background:#c2c2c2;"></div>
<span class="t" style="left:1040.0px;top:139.8px;font-size:10.8px;line-height:10.8px;color:#c2c2c2;letter-spacing:0.19px;">1000</span>
<div class="b" style="left:1092.7px;top:138px;width:1.5px;height:17px;background:#c2c2c2;"></div>
<span class="t" style="left:1097.1px;top:139.8px;font-size:10.8px;line-height:10.8px;color:#c2c2c2;letter-spacing:0.39px;">1100</span>
<div class="b" style="left:1149.7px;top:138px;width:1.5px;height:17px;background:#c2c2c2;"></div>
<span class="t" style="left:1154.2px;top:139.8px;font-size:10.8px;line-height:10.8px;color:#c2c2c2;letter-spacing:0.19px;">1200</span>
<div class="b" style="left:1206.7px;top:138px;width:1.5px;height:17px;background:#c2c2c2;"></div>
<span class="t" style="left:1211.3px;top:139.8px;font-size:10.8px;line-height:10.8px;color:#c2c2c2;letter-spacing:0.19px;">1300</span>
<div class="b" style="left:1264.7px;top:138px;width:1.5px;height:17px;background:#c2c2c2;"></div>
<span class="t" style="left:1268.4px;top:139.8px;font-size:10.8px;line-height:10.8px;color:#c2c2c2;letter-spacing:0.19px;">1400</span>
<div class="b" style="left:1321.7px;top:138px;width:1.5px;height:17px;background:#c2c2c2;"></div>
<span class="t" style="left:1325.5px;top:139.8px;font-size:10.8px;line-height:10.8px;color:#c2c2c2;letter-spacing:0.19px;">1500</span>
<div class="b" style="left:1378.7px;top:138px;width:1.5px;height:17px;background:#c2c2c2;"></div>
<span class="t" style="left:1382.6px;top:139.8px;font-size:10.8px;line-height:10.8px;color:#c2c2c2;letter-spacing:0.19px;">1600</span>
<div class="b" style="left:1435.7px;top:138px;width:1.5px;height:17px;background:#c2c2c2;"></div>
<span class="t" style="left:1439.7px;top:139.8px;font-size:10.8px;line-height:10.8px;color:#c2c2c2;letter-spacing:0.19px;">1700</span>
<div class="b" style="left:1492.7px;top:138px;width:1.5px;height:17px;background:#c2c2c2;"></div>
<span class="t" style="left:1496.8px;top:139.8px;font-size:10.8px;line-height:10.8px;color:#c2c2c2;letter-spacing:0.19px;">1800</span>
<div class="b" style="left:1549.7px;top:138px;width:1.5px;height:17px;background:#c2c2c2;"></div>
<span class="t" style="left:1553.9px;top:139.8px;font-size:10.8px;line-height:10.8px;color:#c2c2c2;letter-spacing:0.19px;">1900</span>
<svg class="a" style="left:0;top:0" width="80" height="1060" viewBox="0 0 80 1060" shape-rendering="crispEdges"><path d="M78 158.5h-4M78 163.5h-4M78 169.5h-4M78 175.5h-4M78 181.5h-6M78 186.5h-4M78 192.5h-4M78 198.5h-4M78 203.5h-4M78 215.5h-4M78 221.5h-4M78 226.5h-4M78 232.5h-4M78 238.5h-6M78 243.5h-4M78 249.5h-4M78 255.5h-4M78 260.5h-4M78 272.5h-4M78 278.5h-4M78 283.5h-4M78 289.5h-4M78 295.5h-6M78 300.5h-4M78 306.5h-4M78 312.5h-4M78 318.5h-4M78 329.5h-4M78 335.5h-4M78 340.5h-4M78 346.5h-4M78 352.5h-6M78 358.5h-4M78 363.5h-4M78 369.5h-4M78 375.5h-4M78 386.5h-4M78 392.5h-4M78 398.5h-4M78 403.5h-4M78 409.5h-6M78 415.5h-4M78 420.5h-4M78 426.5h-4M78 432.5h-4M78 443.5h-4M78 449.5h-4M78 455.5h-4M78 460.5h-4M78 466.5h-6M78 472.5h-4M78 477.5h-4M78 483.5h-4M78 489.5h-4M78 500.5h-4M78 506.5h-4M78 512.5h-4M78 517.5h-4M78 523.5h-6M78 529.5h-4M78 535.5h-4M78 540.5h-4M78 546.5h-4M78 557.5h-4M78 563.5h-4M78 569.5h-4M78 575.5h-4M78 580.5h-6M78 586.5h-4M78 592.5h-4M78 597.5h-4M78 603.5h-4M78 615.5h-4M78 620.5h-4M78 626.5h-4M78 632.5h-4M78 637.5h-6M78 643.5h-4M78 649.5h-4M78 654.5h-4M78 660.5h-4M78 672.5h-4M78 677.5h-4M78 683.5h-4M78 689.5h-4M78 694.5h-6M78 700.5h-4M78 706.5h-4M78 712.5h-4M78 717.5h-4M78 729.5h-4M78 734.5h-4M78 740.5h-4M78 746.5h-4M78 752.5h-6M78 757.5h-4M78 763.5h-4M78 769.5h-4M78 774.5h-4M78 786.5h-4M78 792.5h-4M78 797.5h-4M78 803.5h-4M78 809.5h-6M78 814.5h-4M78 820.5h-4M78 826.5h-4M78 831.5h-4M78 843.5h-4M78 849.5h-4M78 854.5h-4M78 860.5h-4M78 866.5h-6M78 871.5h-4M78 877.5h-4M78 883.5h-4M78 889.5h-4M78 900.5h-4M78 906.5h-4M78 911.5h-4M78 917.5h-4M78 923.5h-6M78 929.5h-4M78 934.5h-4M78 940.5h-4M78 946.5h-4M78 957.5h-4M78 963.5h-4M78 969.5h-4M78 974.5h-4M78 980.5h-6M78 986.5h-4M78 991.5h-4M78 997.5h-4M78 1003.5h-4M78 1014.5h-4M78 1020.5h-4M78 1026.5h-4M78 1031.5h-4M78 1037.5h-6M78 1043.5h-4M78 1048.5h-4" stroke="#c2c2c2" stroke-width="1" fill="none"/></svg>
<div class="b" style="left:59px;top:155.500px;width:19px;height:897.500px;overflow:hidden">
<div class="b" style="left:1px;top:-4px;width:18px;height:1.8px;background:#a4a4a4;"></div>
<span class="t" style="left:0.500px;top:17.8px;font-size:11.800px;line-height:11.800px;color:#c2c2c2;letter-spacing:0.04px;transform-origin:0 0;transform:rotate(-90deg);">700</span>
<div class="b" style="left:1px;top:53px;width:18px;height:1.8px;background:#a4a4a4;"></div>
<span class="t" style="left:0.500px;top:74.9px;font-size:11.800px;line-height:11.800px;color:#c2c2c2;letter-spacing:0.04px;transform-origin:0 0;transform:rotate(-90deg);">600</span>
<div class="b" style="left:1px;top:110px;width:18px;height:1.8px;background:#a4a4a4;"></div>
<span class="t" style="left:0.500px;top:132.0px;font-size:11.800px;line-height:11.800px;color:#c2c2c2;letter-spacing:0.04px;transform-origin:0 0;transform:rotate(-90deg);">500</span>
<div class="b" style="left:1px;top:167px;width:18px;height:1.8px;background:#a4a4a4;"></div>
<span class="t" style="left:0.500px;top:189.1px;font-size:11.800px;line-height:11.800px;color:#c2c2c2;letter-spacing:0.04px;transform-origin:0 0;transform:rotate(-90deg);">400</span>
<div class="b" style="left:1px;top:224px;width:18px;height:1.8px;background:#a4a4a4;"></div>
<span class="t" style="left:0.500px;top:246.2px;font-size:11.800px;line-height:11.800px;color:#c2c2c2;letter-spacing:0.04px;transform-origin:0 0;transform:rotate(-90deg);">300</span>
<div class="b" style="left:1px;top:282px;width:18px;height:1.8px;background:#a4a4a4;"></div>
<span class="t" style="left:0.500px;top:303.3px;font-size:11.800px;line-height:11.800px;color:#c2c2c2;letter-spacing:0.04px;transform-origin:0 0;transform:rotate(-90deg);">200</span>
<div class="b" style="left:1px;top:339px;width:18px;height:1.8px;background:#a4a4a4;"></div>
<span class="t" style="left:0.500px;top:360.4px;font-size:11.800px;line-height:11.800px;color:#c2c2c2;letter-spacing:0.04px;transform-origin:0 0;transform:rotate(-90deg);">100</span>
<div class="b" style="left:1px;top:396px;width:18px;height:1.8px;background:#a4a4a4;"></div>
<span class="t" style="left:0.500px;top:404.3px;font-size:11.800px;line-height:11.800px;color:#c2c2c2;letter-spacing:0.04px;transform-origin:0 0;transform:rotate(-90deg);">0</span>
<div class="b" style="left:1px;top:453px;width:18px;height:1.8px;background:#a4a4a4;"></div>
<span class="t" style="left:0.500px;top:474.6px;font-size:11.800px;line-height:11.800px;color:#c2c2c2;letter-spacing:0.04px;transform-origin:0 0;transform:rotate(-90deg);">100</span>
<div class="b" style="left:1px;top:510px;width:18px;height:1.8px;background:#a4a4a4;"></div>
<span class="t" style="left:0.500px;top:531.7px;font-size:11.800px;line-height:11.800px;color:#c2c2c2;letter-spacing:0.04px;transform-origin:0 0;transform:rotate(-90deg);">200</span>
<div class="b" style="left:1px;top:567px;width:18px;height:1.8px;background:#a4a4a4;"></div>
<span class="t" style="left:0.500px;top:588.8px;font-size:11.800px;line-height:11.800px;color:#c2c2c2;letter-spacing:0.04px;transform-origin:0 0;transform:rotate(-90deg);">300</span>
<div class="b" style="left:1px;top:624px;width:18px;height:1.8px;background:#a4a4a4;"></div>
<span class="t" style="left:0.500px;top:645.9px;font-size:11.800px;line-height:11.800px;color:#c2c2c2;letter-spacing:0.04px;transform-origin:0 0;transform:rotate(-90deg);">400</span>
<div class="b" style="left:1px;top:681px;width:18px;height:1.8px;background:#a4a4a4;"></div>
<span class="t" style="left:0.500px;top:703.0px;font-size:11.800px;line-height:11.800px;color:#c2c2c2;letter-spacing:0.04px;transform-origin:0 0;transform:rotate(-90deg);">500</span>
<div class="b" style="left:1px;top:738px;width:18px;height:1.8px;background:#a4a4a4;"></div>
<span class="t" style="left:0.500px;top:760.1px;font-size:11.800px;line-height:11.800px;color:#c2c2c2;letter-spacing:0.04px;transform-origin:0 0;transform:rotate(-90deg);">600</span>
<div class="b" style="left:1px;top:795px;width:18px;height:1.8px;background:#a4a4a4;"></div>
<span class="t" style="left:0.500px;top:817.2px;font-size:11.800px;line-height:11.800px;color:#c2c2c2;letter-spacing:0.04px;transform-origin:0 0;transform:rotate(-90deg);">700</span>
<div class="b" style="left:1px;top:853px;width:18px;height:1.8px;background:#a4a4a4;"></div>
<span class="t" style="left:0.500px;top:874.3px;font-size:11.800px;line-height:11.800px;color:#c2c2c2;letter-spacing:0.04px;transform-origin:0 0;transform:rotate(-90deg);">800</span>
</div>
<!-- p_stage -->
<div class="b" style="left:78px;top:155px;width:1517px;height:898px;background:#262626;"></div>
<div class="b" style="left:1578px;top:155px;width:17px;height:898px;background:#292929;"></div>
<div class="b" style="left:465.5px;top:155px;width:618px;height:866px;background:#cb99f7;border:1px solid #1a1a1a;border-top:0;"></div>
<div class="b" style="left:178px;top:1042px;width:1417px;height:5px;background:#707070;border-radius:2.500px;"></div>
<div class="b" style="left:1583.7px;top:512px;width:5.2px;height:232px;background:#707070;border-radius:2.500px;"></div>
<div class="b" style="left:467px;top:155px;width:616px;height:865px;overflow:hidden">
<svg class="a" style="left:0;top:0" width="616" height="864" viewBox="467 155 616 864">
<!-- speech bubble -->
<path d="M516.500 150v72q0 11 11 11h365.500c-5 18-11 32-22 45 18-11 31-26 41-45h110q11 0 11-11v-72z" fill="#fff" stroke="#8a8a8a" stroke-width="1.800" stroke-linejoin="round"/>
<!-- ground shadow -->
<ellipse cx="782.500" cy="952.500" rx="115" ry="39.500" fill="#bd94e6"/>
<g stroke="#8a8a8a" stroke-width="2.300" stroke-linejoin="round" stroke-linecap="round" fill="#a98ecf">
<!-- shoes -->
<g fill="#999cc6">
<g id="shoeL"><path d="M713.300 927c-2 5-4 10-5.700 15.200-2 4-3.500 8-4.400 12.300-0.800 3.500-1 7-0.900 10.500 4 2.500 9 3.800 14.100 4.400 5 0.600 10.500 0.700 15.800 0.500 7-0.300 14.500-1.200 21.100-3.100 2-3 3.500-6.500 4.400-10.600 0.300-2.500 0.300-4.800 0.400-7 1.500-0.300 2.200-0.800 2.200-1.700v-10.600l-0.900-9.900z"/>
<path d="M703.500 962.500c5-8 14-14 25.200-14.600 10-0.300 19.500 5 25.400 13.600M702.500 964.500c8-2.500 15-4 22.500-3.900 5.500 0.200 9.500 3.500 14.200 4.400 5 0.800 10-0.200 14-1M715.500 966c4-1.700 8-2.800 11.500-2.700 4.500 0.200 8 2.500 12 3.700" fill="none" stroke-width="1.700"/>
<path d="M715 929c-0.500 4.500 0 8.500 1.400 12.300 3.500 1.200 7 1.500 10.600 0.900 4-0.800 8-1.500 12.200-0.900 2.500 0.500 4.700 1.500 7 1.700 2-2.500 3.200-5 3.500-8M753.300 937c1 5.500 2.200 10.500 3.500 15.700" fill="none" stroke-width="1.600"/>
<path d="M722.500 931.500h14.500M722 934.500h15M723 937.500h13M728.700 930v9" fill="none" stroke-width="1.500"/></g>
<use href="#shoeL" transform="translate(1563.500 0) scale(-1 1)"/>
</g>
<!-- trousers -->
<path d="M708 665v25l-4 60-1.500 53 2 38 9 86 49.500 0.500 0.500-40-2-76 3.500-18 14.500-76.500 13 86 3 30 4.500 42 2.500 54 48.500-3.500 3.500-50-1-72-1-60-1-54v-30z"/>
<path d="M754 718c5 5 9 11 11.500 18M798 717c-6 5-11 12-14 19M717 792c3 3 6 6 7.500 9M755 798c-3 1.500-6 4-8.500 7M800 799c4 1.500 7 4 9.500 7M840 792c-3 2-6 5-8 9M767 704c3 4 6 9 7 14M805 702c-4 4-7 9-9.500 14" fill="none" stroke-width="1.900"/>
<!-- left arm (viewer left) -->
<path d="M735.600 440.600l-16.200 19.400-33.400 22.500c-5 4-7.500 9-8 15l-2.400 92.500-6.850 85 3.500 3 33 5 3-3-1-70-3-90z" stroke="none"/>
<!-- jacket body -->
<path d="M735.600 440.600l-16.200 19.400-33.400 22.500c6 12 11 26 15 37.500l3 80 4.500 104c18 1.500 36 2.500 50 0 9-3 16-14 20.500-31.500 5 14 12 22 22 25 20 1 40-0.500 58-2.500c-3-40-10-110-15-185l12-56-1-0.500-53.500-13-3-6z" stroke="none"/>
<!-- right arm raised -->
<path d="M798 439.500l3.500 1.500 53.500 12.500c6 1.500 9 5 11.500 10l35.500 54-24 42-35-49z" stroke="none"/>
<!-- shirt + neck -->
<path d="M735.600 440.600l54.400-9.400 8 7.500-24.400 110.300z" fill="#fff" stroke="none"/>
<path d="M752 439l15.500 11 22.500-18.800-6-4.500z" fill="#f0c4e0" stroke="none"/>
<!-- tie -->
<path d="M763.750 470h11.250l9.400 37.500-10.800 40-15.600-40z" fill="#e8aac8" stroke-width="1.800"/>
<path d="M761.250 458.750l6.750-7.750 9 8.400-2 10.600c-3.500 1.200-7.500 1.200-11.250 0z" fill="#e8aac8" stroke-width="1.800"/>
<!-- collar -->
<path d="M735.600 440.600l31.900 9.400-6.250 8.750-16.250 12.500z" fill="#fff" stroke-width="1.900"/>
<path d="M790 431.250l8 7.500-5 29.250-16-8.600-9.500-9.400z" fill="#fff" stroke-width="1.900"/>
<path d="M745 471.250l12.500 35M793 468l-7.500 36" fill="none" stroke-width="1.800"/>
<!-- lapels -->
<path d="M743 463l-27.400 17.600 58.150 76.900-0.150-8.500z"/>
<path d="M735.600 440.600l-16.200 19.400-1.900 4.400 10.500 6.850 15-8.250z"/>
<path d="M794 460l29 14.400-49.250 83.100-0.150-8.500z"/>
<path d="M798 438.750l21.400 18.250-7.900 9.500-17.500-6.500z"/>
<path d="M773.750 557.500c2.500 30 4 80 5.500 115.500" fill="none"/>
<circle cx="786" cy="586" r="5" />
<path d="M784 623.500c2-0.800 5-0.800 7 0" fill="none" stroke-width="1.600"/>
<!-- pockets -->
<path d="M709 644.500l24-5-0.500-21-24 3.500M849 635l-24-1.500-1-21 24-1.500" fill="none"/>
<!-- outlines -->
<path d="M719.400 460l-33.400 22.500c-5 4-7.500 9-8 15l-2.400 92.500-6.850 85 3.500 3 33 5 3-3" fill="none"/>
<path d="M700.500 520l3.500 80 4.500 104c18 1.500 36 2.500 50 0 9-3 16-14 20.500-31.500 5 14 12 22 22 25 20 1 40-0.500 58-2.500c-3-40-10-110-15-185" fill="none"/>
<path d="M798 439.500l3.500 1.500 53.500 12.500c6 1.500 9 5 11.500 10l35.500 54" fill="none"/>
<path d="M843 511l35 49" fill="none"/>
<!-- left hand -->
<path d="M674.400 680c0-2 1.500-3.300 4-3.300l22 0.300c3 0.200 4.600 2 4.600 4.700-0.500 6-3.500 12-4 18.300 0.300 6 1.700 12 1.500 17.500-0.200 4-1.500 7.500-4 8.500-2 0.800-3.500 0.500-4.500-0.500-1.500 2-4 2.800-6.500 1.800-1.500 1.800-4 2.400-6 2-4-0.800-6.500-4-8-8.500-2.500-8-3-18-2.600-27 0.200-5 1.500-9.500 3.500-13.800z" fill="#f0c6e2"/>
<path d="M681 683.700l7.700 21.300c0.800 2.500 5.500 2.500 6.500 0l-2.200-23M688 707.500l2.600 19M693.700 707.500l4.300 17.500" fill="none" stroke-width="1.700"/>
<!-- forearm capsule -->
<path d="M925 489.400l34.400 25.600-40.600 55c-5 6.500-11 8.500-18.800 8-8-1-14-5-17.500-10.500-3.500-5.500-5.500-11-4.500-16 0.500-4 1.500-7 3.500-10z"/>
<!-- right hand -->
<path d="M927.500 500C928 488 933 474 938.700 465C940.500 461.500 942.500 460 944.500 460.500C948 461.200 950.500 464 950.600 468C950.700 471 950.300 473 950 475C955 470 960 463.500 964 459.500C967 456.500 971.500 456 974 458.500C976 460.500 975.500 463.500 973.800 465.300C977 465.500 979.500 468.500 979.300 472.500C979.200 476 978 479 976.500 481.500C979 484 979 488 976.500 491.500C972 497.500 965 503.500 958 508C952 511.800 948 513.800 944 514.500C939 515.300 935.500 513.500 933 510.500C930 507 928 503.500 927.500 500z" fill="#f0c6e2"/>
<path d="M950 475c-1.800 2-3.600 3.600-5.600 5M952.500 485c5-3.500 9.500-9 13.500-16.500 2.500-2 5.500-3 7.800-3.200M954.400 496.200c4.500-3 8.500-7.500 11.600-12.500 3.500-1.500 7.500-2 10.500-2.200" fill="none" stroke-width="1.800"/>
</g>
<!-- head -->
<g stroke="#0a0a0a" stroke-width="2.200" stroke-linejoin="round" stroke-linecap="round">
<!-- left ear -->
<path d="M714 351c-5-1-7.500 4-7 10 0.800 7 3 14 6 19z" fill="#df8fbe"/>
<!-- hair silhouette -->
<path d="M706.5 318.8C706.5 317.3 709.6 314.1 711.0 312.0C712.4 309.9 713.5 308.2 714.8 306.0C716.0 303.8 716.6 301.4 718.5 298.5C720.4 295.6 723.8 291.5 726.0 288.8C728.2 286.0 730.0 283.7 732.0 282.0C734.0 280.3 736.4 279.1 738.0 278.6C739.6 278.1 740.7 279.1 741.8 279.2C742.8 279.3 742.1 279.4 744.5 279.0C746.9 278.6 752.2 277.4 756.0 276.8C759.8 276.1 763.5 275.2 767.2 275.2C771.0 275.2 774.8 275.8 778.5 276.8C782.2 277.7 786.0 279.0 789.8 280.9C793.5 282.8 797.9 285.8 801.0 288.0C804.1 290.2 806.0 292.8 808.5 294.0C811.0 295.2 813.8 294.0 816.0 295.5C818.2 297.0 820.2 299.5 822.0 303.0C823.8 306.5 825.5 311.8 826.5 316.5C827.5 321.2 827.8 326.5 827.7 331.5C827.6 336.5 826.6 342.4 825.8 346.5C825.0 350.6 824.1 350.4 822.8 356.0C821.5 361.6 819.8 373.3 818.0 380.0C816.2 386.7 821.7 392.7 812.0 396.0C802.3 399.3 775.7 401.8 760.0 400.0C744.3 398.2 726.0 391.3 718.0 385.0C710.0 378.7 713.5 367.8 712.0 362.0C710.5 356.2 709.7 354.1 709.0 350.2C708.3 346.4 708.0 343.4 708.0 339.0C708.0 334.6 708.5 327.0 709.0 324.0C709.5 321.0 711.4 321.9 711.0 321.0C710.6 320.1 706.5 320.3 706.5 318.8z" fill="#50619b"/>
<!-- small hair tuft below right ear -->
<path d="M811.500 383c0.500 5 1 9 0.500 13.500 3.500-1 5.500-4 6-8z" fill="#50619b" stroke-width="1.600"/>
<!-- face -->
<path d="M721.3 322.5C723.0 320.2 724.3 318.7 729.0 317.3C733.7 315.9 743.4 314.3 749.4 313.9C755.4 313.5 760.3 314.0 765.0 314.7C769.7 315.4 774.3 316.5 777.5 317.8C780.7 319.1 780.9 320.9 784.0 322.5C787.1 324.1 792.5 326.4 796.3 327.2C800.0 328.0 804.4 325.2 806.5 327.3C808.6 329.4 808.1 335.6 808.7 340.0C809.3 344.4 809.8 349.5 810.3 353.8C810.8 358.1 811.7 361.3 811.7 366.0C811.8 370.7 810.7 377.0 810.6 382.0C810.5 387.0 811.8 391.6 811.0 396.0C810.2 400.4 809.1 403.5 805.6 408.4C802.1 413.3 796.2 420.9 790.0 425.6C783.8 430.3 774.4 434.4 768.1 436.6C761.9 438.8 757.7 439.4 752.5 438.9C747.3 438.4 741.6 436.4 736.9 433.4C732.2 430.4 728.1 426.4 724.4 420.9C720.7 415.4 716.4 407.1 714.6 400.6C712.8 394.1 713.5 389.2 713.4 381.9C713.3 374.6 713.7 363.6 714.2 357.0C714.7 350.4 715.5 346.3 716.2 342.0C716.9 337.7 717.6 334.2 718.5 331.0C719.4 327.8 719.5 324.8 721.3 322.5z" fill="#df8fbe"/>
<!-- ear right -->
<path d="M811.800 366.500c2-5 5-8.500 9-10 5-1 8 1.500 9 7 1 8-2 18-7 25-3 3.500-6 4-8 2.500-2-2-3-5-3.500-8z" fill="#df8fbe"/>
<path d="M817 368.500c2-3 5-5 8-4.500" fill="none" stroke-width="1.600"/>
<!-- hair inner lines -->
<path d="M756.0 277.1C755.5 278.0 753.6 280.8 753.0 282.8C752.4 284.7 752.1 286.4 752.2 288.8C752.4 291.1 753.2 295.1 753.8 297.0C754.2 298.9 754.5 299.9 755.2 300.0C756.0 300.1 756.9 298.1 758.2 297.8C759.6 297.4 761.6 297.2 763.5 297.8C765.4 298.2 767.8 299.4 769.5 300.8C771.2 302.1 772.8 304.1 774.0 306.0C775.2 307.9 776.2 310.2 777.0 312.0C777.8 313.8 777.6 315.0 778.5 316.5C779.4 318.0 780.4 319.5 782.2 321.0C784.1 322.5 787.2 324.4 789.8 325.5C792.2 326.6 794.9 327.1 797.2 327.4C799.6 327.6 801.9 327.8 804.0 327.0C806.1 326.2 808.5 324.5 810.0 322.5C811.5 320.5 812.4 317.5 813.0 315.0C813.6 312.5 814.0 310.0 813.8 307.5C813.5 305.0 812.4 302.1 811.5 300.0C810.6 297.9 809.0 295.8 808.5 295.0" fill="none"/>
<path d="M741.8 279.4C741.9 280.1 743.1 281.8 742.5 283.5C741.9 285.2 739.8 287.2 738.0 289.5C736.2 291.8 733.8 294.2 732.0 297.0C730.2 299.8 728.6 303.6 727.5 306.0C726.4 308.4 725.6 310.6 725.2 311.5l-2.500-0.500-3-6-3 3.500-2.500 3.500-1.500-3-4.500 8" fill="none"/>
<path d="M789.750 283.500c3 1.200 5 2.200 8 4.200 3.500 2.500 6.500 5.500 9.200 8.500" fill="none" stroke-width="1.400"/>
<path d="M706.500 318.800c3.500 2.700 7.500 3.500 11.500 3 1.500-0.200 2.700 0.100 3.300 0.700" fill="none"/>
<path d="M744.500 279.200c0.500 1.500 0.800 3 0.600 4.500 3-1.500 6-2.300 8.700-2.500" fill="none" stroke-width="1.800"/>
<!-- eyebrows -->
<path d="M717.750 347.500c2.500-4 7-6.300 12-6.300 6.500 0.300 12.500 3.300 16.500 8-9.500-1.200-19-1.700-28.500-1.700z" fill="#50619b" stroke-width="1.700"/>
<path d="M765 350.300c3.500-4.500 9.500-7.300 15.700-7.200 5.500 0.400 10.500 3.800 13.500 8.300-9.500-1-19.500-1.300-29.200-1.100z" fill="#50619b" stroke-width="1.700"/>
<!-- eyes -->
<path d="M720.300 365c0.500-3.500 3-6 7-6.800 4-0.700 8-0.500 11 0.500 2 0.800 3.200 2.500 3.400 5-0.300 5.500-5 9.800-11 9.800s-10.200-3.500-10.400-8.500z" fill="#fff" stroke="none"/>
<path d="M769.800 366.800c0.500-3.500 3-6 7-6.800 4-0.700 8-0.500 11 0.500 2 0.800 3.200 2.500 3.400 5-0.300 5.500-5 9.800-11 9.800s-10.200-3.500-10.400-8.500z" fill="#fff" stroke="none"/>
<path d="M726.300 363.500c0-2.200 0.700-4 1.800-5.500 3.500-0.800 7.500-0.500 10.500 0.700 1.200 1.500 1.900 3.200 1.900 5.300 0 4-3.200 7.200-7.100 7.200s-7.100-3.500-7.100-7.700z" fill="#0a0a0a" stroke="none"/>
<path d="M775.400 365.300c0-2.200 0.700-4 1.800-5.500 3.500-0.800 7.500-0.500 10.500 0.700 1.200 1.500 1.900 3.200 1.900 5.300 0 4-3.200 7.200-7.100 7.200s-7.100-3.500-7.100-7.700z" fill="#0a0a0a" stroke="none"/>
<ellipse cx="734.700" cy="361.300" rx="2.400" ry="1.400" fill="#fff" stroke="none" transform="rotate(25 734.700 361.300)"/>
<ellipse cx="783.500" cy="362.900" rx="2.400" ry="1.400" fill="#fff" stroke="none" transform="rotate(25 783.500 362.900)"/>
<path d="M720.200 365c0.600-3.500 3-6 7-6.800 4-0.700 8-0.500 11 0.500 2 0.800 3.200 2.300 3.500 4.500M769.700 366.800c0.600-3.500 3-6 7-6.800 4-0.700 8-0.500 11 0.500 2 0.800 3.200 2.300 3.500 4.500" fill="none" stroke-width="1.800"/>
<!-- glasses -->
<ellipse cx="730.700" cy="362.600" rx="13.300" ry="12.700" fill="none" stroke-width="2.700"/>
<ellipse cx="781" cy="364.800" rx="13.300" ry="12.700" fill="none" stroke-width="2.700"/>
<path d="M744.200 361c8-1 15.500 0 23.300 2.500" fill="none" stroke-width="1.200"/>
<!-- nose, mouth -->
<path d="M747.800 379.500l-5 18 16-4.700" fill="none" stroke-width="2.300"/>
<path d="M736 411c1.500-2.500 3.500-4 6-4 3 0.500 5 3 8.500 3 2.500-0.500 4-2.500 7-2.300 3.500 0.300 6.500 2.300 9 4.800" fill="none" stroke-width="2.300"/>
<path d="M746.500 419.500c2.500 0.800 5 0.800 7.500 0" fill="none" stroke-width="2.300"/>
</g>
</svg>

<span class="t" style="left:85.8px;top:-2.4px;font-size:54px;line-height:54px;color:#828282;letter-spacing:0.03px;font-family:'Liberation Serif',serif;word-spacing:3px;">that boarding school</span>
</div>
<!-- p_timeline -->
<div class="b" style="left:59px;top:1053px;width:1536px;height:4px;background:#262626;"></div>
<div class="b" style="left:59px;top:1057px;width:1536px;height:19.5px;background:#2c2c2c;"></div>
<div class="b" style="left:59px;top:1057px;width:68px;height:20px;background:#323232;"></div>
<div class="b" style="left:127px;top:1057px;width:1px;height:19px;background:#262626;"></div>
<div class="b" style="left:184px;top:1057px;width:1px;height:19px;background:#262626;"></div>
<div class="b" style="left:127px;top:1075.5px;width:1468px;height:1px;background:#262626;"></div>
<span class="t" style="left:67.5px;top:1059.8px;font-size:11.5px;line-height:11.5px;color:#f2f2f2;letter-spacing:0.57px;font-weight:bold;">Timeline</span>
<span class="t" style="left:135.0px;top:1059.8px;font-size:11.5px;line-height:11.5px;color:#8c8c8c;letter-spacing:0.55px;font-weight:bold;">Output</span>
<div class="b" style="left:59px;top:1131px;width:382px;height:1.5px;background:#282828;"></div>
<div class="b" style="left:441px;top:1131px;width:1154px;height:1.5px;background:#2a2a2a;"></div>
<div class="b" style="left:440px;top:1076px;width:1.5px;height:204px;background:#282828;"></div>
<div class="b" style="left:59px;top:1178px;width:382px;height:1.5px;background:#282828;"></div>
<div class="b" style="left:59px;top:1206.5px;width:382px;height:1px;background:#2a2a2a;"></div>
<div class="b" style="left:59px;top:1235px;width:382px;height:1px;background:#2a2a2a;"></div>
<div class="b" style="left:59px;top:1259.5px;width:382px;height:1px;background:#2a2a2a;"></div>
<div class="b" style="left:59px;top:1207.5px;width:381px;height:28px;background:#3f5f8e;"></div>
<span class="t" style="left:135.0px;top:1187.4px;font-size:12.5px;line-height:12.5px;color:#dcdcdc;letter-spacing:-0.65px;-webkit-text-stroke:0.250px;">Extras</span>
<span class="t" style="left:135.0px;top:1215.9px;font-size:12.5px;line-height:12.5px;color:#ffffff;letter-spacing:-0.65px;-webkit-text-stroke:0.250px;">Extras</span>
<span class="t" style="left:114.5px;top:1244.4px;font-size:12.5px;line-height:12.5px;color:#dcdcdc;letter-spacing:-0.55px;-webkit-text-stroke:0.250px;">Clean_Morph</span>
<div class="b" style="left:350px;top:1186px;width:7px;height:14px;background:#e35cf3;"></div>
<div class="b" style="left:350px;top:1214.5px;width:7px;height:14px;background:#5fa044;"></div>
<div class="b" style="left:350px;top:1243px;width:7px;height:14px;background:#e5443a;"></div>
<svg class="a" style="left:59px;top:1076px" width="382" height="204" viewBox="59 1076 382 204" fill="none" stroke="#c4c4c4" stroke-width="1.300" stroke-linejoin="round" stroke-linecap="round">
<g fill="#c4c4c4" stroke="none"><path d="M91.500 1096.500l8.500 4.500-8.500 4.500-8.500-4.500z"/><path d="M84.800 1104.300l6.700 3.500 6.700-3.500 1.800 1-8.500 4.500-8.500-4.500z"/><path d="M84.800 1108.600l6.700 3.500 6.700-3.500 1.800 1-8.500 4.500-8.500-4.500z"/></g>
<g fill="#555" stroke="none"><rect x="327" y="1100" width="11.500" height="10" rx="1"/><path d="M339.500 1103.500l4.500-2.500v8l-4.500-2.500z"/></g>
<g fill="#c4c4c4" stroke="none"><rect x="369" y="1097" width="6" height="4.500"/><rect x="363.500" y="1107" width="6" height="4.500"/><rect x="374.500" y="1107" width="6" height="4.500"/><path d="M379.500 1114.500l2.500-2.500v2.500z"/></g><path d="M372 1101.500v3M366.500 1107v-2.500h11v2.500" stroke-width="1.200"/>
<path d="M400.500 1097.500v15.500h15.500" stroke-width="1.300"/><path d="M403 1110l9.500-7.500" stroke-width="1.300"/><path d="M413.500 1101.500l-4.500 0.800 3.500 3.500z" fill="#c4c4c4" stroke="none"/>
<rect x="83.500" y="1147.500" width="14" height="14" stroke-width="1.200"/><path d="M90.500 1150.500v8M86.500 1154.500h8" stroke-width="1.200"/>
<path d="M119.500 1148.500h6l2 2h9.500v11.500h-17.500z" fill="#c4c4c4" stroke="none"/>
<path d="M155.500 1149.700h17" stroke-width="1.500"/><path d="M161.500 1149v-2.200h6.500v2.200" stroke-width="1.500"/><path d="M157 1151.500h14.200l-1.400 13.200h-11.400z" fill="#c4c4c4" stroke="none"/><path d="M161.300 1153v9.500M164.100 1153v9.500M166.900 1153v9.500" stroke="#3a3a3a" stroke-width="1.300"/>
<circle cx="326.800" cy="1155.500" r="3.200" fill="#c4c4c4" stroke="none"/>
<rect x="348.300" y="1147.200" width="7.600" height="16.600" stroke-width="2.200" stroke-linejoin="miter"/>
<path d="M372.500 1155.500c2.500-4.300 5.500-6.300 9-6.300s6.500 2 9 6.300c-2.500 4.300-5.500 6.300-9 6.300s-6.500-2-9-6.300z" fill="#c4c4c4" stroke="none"/><circle cx="381.500" cy="1155.500" r="3.600" fill="none" stroke="#323232" stroke-width="1.500"/><path d="M373.500 1147l17 17" stroke="#323232" stroke-width="3.200"/><path d="M373.500 1147l17 17" stroke-width="1.500"/>
<path d="M407.5 1155.5v-4.0a3.9 3.9 0 0 1 7.8 0v4.0" fill="none" stroke="#c4c4c4" stroke-width="2.5"/><rect x="404.6" y="1155.0" width="13.7" height="10.1" rx="0.800" fill="#c4c4c4"/><circle cx="411.4" cy="1158.6" r="1.4" fill="#323232"/><path d="M411.4 1159.0v3.3" stroke="#323232" stroke-width="1.8"/>
<path d="M113.5 1186h13v13.500h-8.500l-4.500-4.500z" fill="#6e6e6e" stroke="#c4c4c4" stroke-width="1.300" stroke-linejoin="round"/><path d="M113.5 1195h4.500v4.500" fill="none" stroke="#c4c4c4" stroke-width="1.200"/><path d="M113.5 1214.5h13v13.500h-8.500l-4.500-4.500z" fill="#6e6e6e" stroke="#c4c4c4" stroke-width="1.300" stroke-linejoin="round"/><path d="M113.5 1223.5h4.500v4.500" fill="none" stroke="#c4c4c4" stroke-width="1.200"/><path d="M93 1243h13v13.500h-8.500l-4.500-4.500z" fill="#6e6e6e" stroke="#c4c4c4" stroke-width="1.300" stroke-linejoin="round"/><path d="M93 1252h4.500v4.500" fill="none" stroke="#c4c4c4" stroke-width="1.200"/>
<path d="M408.0 1193.0v-3.4a3.3 3.3 0 0 1 6.6 0v3.4" fill="none" stroke="#dcdcdc" stroke-width="2.1"/><rect x="405.5" y="1192.5" width="11.6" height="8.6" rx="0.800" fill="#dcdcdc"/><circle cx="411.3" cy="1195.7" r="1.2" fill="#323232"/><path d="M411.3 1196.0v2.8" stroke="#323232" stroke-width="1.5"/><path d="M408.0 1221.5v-3.4a3.3 3.3 0 0 1 6.6 0v3.4" fill="none" stroke="#dcdcdc" stroke-width="2.1"/><rect x="405.5" y="1221.0" width="11.6" height="8.6" rx="0.800" fill="#dcdcdc"/><circle cx="411.3" cy="1224.2" r="1.2" fill="#323232"/><path d="M411.3 1224.5v2.8" stroke="#323232" stroke-width="1.5"/><path d="M408.0 1250.0v-3.4a3.3 3.3 0 0 1 6.6 0v3.4" fill="none" stroke="#dcdcdc" stroke-width="2.1"/><rect x="405.5" y="1249.5" width="11.6" height="8.6" rx="0.800" fill="#dcdcdc"/><circle cx="411.3" cy="1252.7" r="1.2" fill="#323232"/><path d="M411.3 1253.0v2.8" stroke="#323232" stroke-width="1.5"/>
</svg>
<span class="t" style="left:471.3px;top:1097.4px;font-size:16.2px;line-height:16.2px;color:#8a8a8a;letter-spacing:0.39px;font-weight:bold;">25.00</span>
<span class="t" style="left:517.0px;top:1097.5px;font-size:10px;line-height:10px;color:#8a8a8a;letter-spacing:-1.15px;">FPS</span>
<span class="t" style="left:563.0px;top:1097.4px;font-size:16.2px;line-height:16.2px;color:#f2f2f2;letter-spacing:0.32px;font-weight:bold;">129</span>
<span class="t" style="left:596.7px;top:1097.5px;font-size:10px;line-height:10px;color:#c4c4c4;">F</span>
<svg class="a" style="left:800px;top:1085px" width="790" height="40" viewBox="800 1085 790 40" fill="none" stroke="#c4c4c4" stroke-width="1.800" stroke-linejoin="round" stroke-linecap="round">
<path d="M823.500 1099l-5.500 6 5.500 6M895.500 1099l5.500 6-5.500 6" stroke-width="2.200"/>
<rect x="852.500" y="1098.500" width="13" height="13" fill="#c4c4c4" stroke="none"/><circle cx="859" cy="1105" r="2.800" fill="#323232" stroke="none"/><path d="M866 1114.500l2.500-2.500v2.500z" fill="#c4c4c4" stroke="none"/>
<path d="M920 1088v34M1079.700 1088v34" stroke="#4e4e4e" stroke-width="1.500"/>
<circle cx="937.500" cy="1105" r="5.200" fill="#9a9a9a" stroke="none"/><circle cx="944" cy="1105" r="5.800" fill="#c4c4c4" stroke="none"/><path d="M948.500 1114.500l2.500-2.500v2.500z" fill="#c4c4c4" stroke="none"/>
<g fill="#c4c4c4" stroke="none"><rect x="973.500" y="1098.500" width="3.500" height="13"/><rect x="978.200" y="1098.500" width="4.600" height="13"/><rect x="984" y="1098.500" width="3.500" height="13"/><path d="M988 1114.500l2.500-2.500v2.500z"/></g><circle cx="980.500" cy="1108.500" r="1.100" fill="#323232" stroke="none"/>
<g fill="#555" stroke="none"><rect x="1011.500" y="1103.500" width="9" height="9"/><rect x="1016.500" y="1098.500" width="9.500" height="9.500" fill="#4c4c4c"/><path d="M1026 1114.500l2.500-2.500v2.500z"/></g>
<path d="M1050.500 1111.500v-11h14.500v11h-3.500v-5.500h-7.500v5.500z" fill="#c4c4c4" stroke="none"/><path d="M1056.500 1103l-2.500 2.200 2.500 2.200z" fill="#323232" stroke="none"/>
<path d="M1097 1101.500h-3.500v10h15.500v-3" stroke-width="1.800" stroke-linejoin="miter"/><path d="M1098.500 1107c0-4 2-5.500 6-5.500h1.500" stroke-width="1.800"/><path d="M1105 1097l5.500 4.500-5.500 4.500z" fill="#c4c4c4" stroke="none"/>
<path d="M1144 1098.500l-10.500 6.500 10.500 6.500z" fill="#c4c4c4" stroke="none"/><path d="M1147.500 1098.500v13" stroke-width="2.200" stroke-linecap="butt"/>
<path d="M1172.500 1098l13 7-13 7z" fill="#c4c4c4" stroke="none"/>
<path d="M1215 1098.500l10.500 6.500-10.500 6.500z" fill="#c4c4c4" stroke="none"/><path d="M1211.500 1098.500v13" stroke-width="2.200" stroke-linecap="butt"/>
<path d="M1406.500 1111.500h16" stroke-width="1.600"/><path d="M1408.500 1102.500c4-3.500 10-3 13 1.500 0.800 1.500 1 2.500 1 4" stroke-width="1.600"/><path d="M1405.500 1098.500v6h6z" fill="#c4c4c4" stroke="none"/>
<path d="M1438.500 1105h13" stroke-width="2" stroke-linecap="butt"/><circle cx="1464" cy="1105" r="5.500" stroke="#e8e8e8" stroke-width="2"/><path d="M1474 1105h66.500" stroke="#4a4a4a" stroke-width="1.300"/>
<path d="M1552 1111l7-10.500 4 5.500 3.500-5.500 7.500 10.500z" fill="#c4c4c4" stroke="none"/>
<path d="M1578 1062.500h11.500M1578 1064.500h11.500M1578 1066.500h11.500M1578 1069.500h11.500" stroke-width="1" stroke="#a6a6a6" shape-rendering="crispEdges"/>
</svg>
<div class="b" style="left:441.5px;top:1132.500px;width:1154.0px;height:128px;overflow:hidden">
<div class="b" style="left:0px;top:16.5px;width:1154px;height:1px;background:#262626;"></div>
<div class="b" style="left:0px;top:45.5px;width:1154px;height:1.5px;background:#262626;"></div>
<div class="b" style="left:0px;top:17.5px;width:1135.0px;height:9.5px;background-image:repeating-linear-gradient(90deg,#262626 0,#262626 1px,transparent 1px,transparent 9.14px);background-position:8.22px 0;"></div>
<div class="b" style="left:26.5px;top:0px;width:1px;height:17px;background:#262626;"></div>
<span class="t" style="left:29.0px;top:30.1px;font-size:11.5px;line-height:11.5px;color:#b4b4b4;letter-spacing:0.10px;">55</span>
<div class="b" style="left:72.2px;top:0px;width:1px;height:17px;background:#262626;"></div>
<span class="t" style="left:74.7px;top:30.1px;font-size:11.5px;line-height:11.5px;color:#b4b4b4;letter-spacing:0.10px;">60</span>
<div class="b" style="left:117.9px;top:0px;width:1px;height:17px;background:#262626;"></div>
<span class="t" style="left:120.4px;top:30.1px;font-size:11.5px;line-height:11.5px;color:#b4b4b4;letter-spacing:0.10px;">65</span>
<div class="b" style="left:163.6px;top:0px;width:1px;height:17px;background:#262626;"></div>
<span class="t" style="left:166.1px;top:30.1px;font-size:11.5px;line-height:11.5px;color:#b4b4b4;letter-spacing:0.10px;">70</span>
<div class="b" style="left:209.3px;top:0px;width:1px;height:17px;background:#262626;"></div>
<span class="t" style="left:211.8px;top:30.1px;font-size:11.5px;line-height:11.5px;color:#b4b4b4;letter-spacing:0.10px;">75</span>
<span class="t" style="left:211.5px;top:3.7px;font-size:11px;line-height:11px;color:#b4b4b4;letter-spacing:-0.56px;font-style:italic;">3s</span>
<div class="b" style="left:255.0px;top:0px;width:1px;height:17px;background:#262626;"></div>
<span class="t" style="left:257.5px;top:30.1px;font-size:11.5px;line-height:11.5px;color:#b4b4b4;letter-spacing:0.10px;">80</span>
<div class="b" style="left:300.7px;top:0px;width:1px;height:17px;background:#262626;"></div>
<span class="t" style="left:303.2px;top:30.1px;font-size:11.5px;line-height:11.5px;color:#b4b4b4;letter-spacing:0.10px;">85</span>
<div class="b" style="left:346.4px;top:0px;width:1px;height:17px;background:#262626;"></div>
<span class="t" style="left:348.9px;top:30.1px;font-size:11.5px;line-height:11.5px;color:#b4b4b4;letter-spacing:0.10px;">90</span>
<div class="b" style="left:392.1px;top:0px;width:1px;height:17px;background:#262626;"></div>
<span class="t" style="left:394.6px;top:30.1px;font-size:11.5px;line-height:11.5px;color:#b4b4b4;letter-spacing:0.10px;">95</span>
<div class="b" style="left:437.8px;top:0px;width:1px;height:17px;background:#262626;"></div>
<span class="t" style="left:440.3px;top:30.1px;font-size:11.5px;line-height:11.5px;color:#b4b4b4;letter-spacing:0.27px;">100</span>
<span class="t" style="left:440.0px;top:3.7px;font-size:11px;line-height:11px;color:#b4b4b4;letter-spacing:-0.56px;font-style:italic;">4s</span>
<div class="b" style="left:483.5px;top:0px;width:1px;height:17px;background:#262626;"></div>
<span class="t" style="left:486.0px;top:30.1px;font-size:11.5px;line-height:11.5px;color:#b4b4b4;letter-spacing:0.27px;">105</span>
<div class="b" style="left:529.2px;top:0px;width:1px;height:17px;background:#262626;"></div>
<span class="t" style="left:531.7px;top:30.1px;font-size:11.5px;line-height:11.5px;color:#b4b4b4;letter-spacing:0.56px;">110</span>
<div class="b" style="left:574.9px;top:0px;width:1px;height:17px;background:#262626;"></div>
<span class="t" style="left:577.4px;top:30.1px;font-size:11.5px;line-height:11.5px;color:#b4b4b4;letter-spacing:0.56px;">115</span>
<div class="b" style="left:620.6px;top:0px;width:1px;height:17px;background:#262626;"></div>
<span class="t" style="left:623.1px;top:30.1px;font-size:11.5px;line-height:11.5px;color:#b4b4b4;letter-spacing:0.27px;">120</span>
<div class="b" style="left:666.3px;top:0px;width:1px;height:17px;background:#262626;"></div>
<span class="t" style="left:668.8px;top:30.1px;font-size:11.5px;line-height:11.5px;color:#b4b4b4;letter-spacing:0.27px;">125</span>
<span class="t" style="left:668.5px;top:3.7px;font-size:11px;line-height:11px;color:#b4b4b4;letter-spacing:-0.56px;font-style:italic;">5s</span>
<div class="b" style="left:712.0px;top:0px;width:1px;height:17px;background:#262626;"></div>
<span class="t" style="left:714.5px;top:30.1px;font-size:11.5px;line-height:11.5px;color:#b4b4b4;letter-spacing:0.27px;">130</span>
<div class="b" style="left:757.7px;top:0px;width:1px;height:17px;background:#262626;"></div>
<span class="t" style="left:760.2px;top:30.1px;font-size:11.5px;line-height:11.5px;color:#b4b4b4;letter-spacing:0.27px;">135</span>
<div class="b" style="left:803.4px;top:0px;width:1px;height:17px;background:#262626;"></div>
<span class="t" style="left:805.9px;top:30.1px;font-size:11.5px;line-height:11.5px;color:#b4b4b4;letter-spacing:0.27px;">140</span>
<div class="b" style="left:849.1px;top:0px;width:1px;height:17px;background:#262626;"></div>
<span class="t" style="left:851.6px;top:30.1px;font-size:11.5px;line-height:11.5px;color:#b4b4b4;letter-spacing:0.27px;">145</span>
<div class="b" style="left:894.8px;top:0px;width:1px;height:17px;background:#262626;"></div>
<span class="t" style="left:897.3px;top:30.1px;font-size:11.5px;line-height:11.5px;color:#b4b4b4;letter-spacing:0.27px;">150</span>
<span class="t" style="left:897.0px;top:3.7px;font-size:11px;line-height:11px;color:#b4b4b4;letter-spacing:-0.56px;font-style:italic;">6s</span>
<div class="b" style="left:940.5px;top:0px;width:1px;height:17px;background:#262626;"></div>
<span class="t" style="left:943.0px;top:30.1px;font-size:11.5px;line-height:11.5px;color:#b4b4b4;letter-spacing:0.27px;">155</span>
<div class="b" style="left:986.2px;top:0px;width:1px;height:17px;background:#262626;"></div>
<span class="t" style="left:988.7px;top:30.1px;font-size:11.5px;line-height:11.5px;color:#b4b4b4;letter-spacing:0.27px;">160</span>
<div class="b" style="left:1031.9px;top:0px;width:1px;height:17px;background:#262626;"></div>
<span class="t" style="left:1034.4px;top:30.1px;font-size:11.5px;line-height:11.5px;color:#b4b4b4;letter-spacing:0.27px;">165</span>
<div class="b" style="left:1077.6px;top:0px;width:1px;height:17px;background:#262626;"></div>
<span class="t" style="left:1080.1px;top:30.1px;font-size:11.5px;line-height:11.5px;color:#b4b4b4;letter-spacing:0.27px;">170</span>
<div class="b" style="left:1123.3px;top:0px;width:1px;height:17px;background:#262626;"></div>
<div class="b" style="left:1123.3px;top:28px;width:8.7px;height:16px;overflow:hidden"><span class="t" style="left:2.5px;top:2.1px;font-size:11.5px;line-height:11.5px;color:#b4b4b4;letter-spacing:0.27px;">175</span></div>
<span class="t" style="left:1125.5px;top:3.7px;font-size:11px;line-height:11px;color:#b4b4b4;letter-spacing:-0.56px;font-style:italic;">7s</span>
<div class="b" style="left:0px;top:47.5px;width:1136.0px;height:27px;background:#5e5e5e;"></div>
<div class="b" style="left:0px;top:76px;width:1136.0px;height:26.5px;background:#5e5e5e;"></div>
<div class="b" style="left:0px;top:104.5px;width:1136.0px;height:22.5px;background:#5e5e5e;"></div>
<div class="b" style="left:0px;top:49.0px;width:1136.0px;height:1px;background-image:repeating-linear-gradient(90deg,#3e3e3e 0,#3e3e3e 1px,transparent 1px,transparent 9.14px);background-position:12.79px 0;"></div>
<div class="b" style="left:0px;top:77.5px;width:1136.0px;height:1px;background-image:repeating-linear-gradient(90deg,#3e3e3e 0,#3e3e3e 1px,transparent 1px,transparent 9.14px);background-position:12.79px 0;"></div>
<div class="b" style="left:0px;top:106.0px;width:1136.0px;height:1px;background-image:repeating-linear-gradient(90deg,#3e3e3e 0,#3e3e3e 1px,transparent 1px,transparent 9.14px);background-position:12.79px 0;"></div>
<div class="b" style="left:702.8600000000001px;top:76px;width:433.1399999999999px;height:26.5px;background:#9a9a9a;"></div>
<div class="b" style="left:702.8600000000001px;top:76px;width:1.2px;height:26.5px;background:#3a3a3a;"></div>
<div class="b" style="left:704.4600000000002px;top:91px;width:6.4px;height:6.4px;background:#111;border-radius:50%;"></div>
<div class="b" style="left:697.6600000000001px;top:89.5px;width:1.6px;height:9px;background:#111;"></div>
<div class="b" style="left:721.1400000000001px;top:76px;width:1.2px;height:26.5px;background:#3a3a3a;"></div>
<div class="b" style="left:722.7400000000001px;top:91px;width:6.4px;height:6.4px;background:#111;border-radius:50%;"></div>
<div class="b" style="left:715.94px;top:89.5px;width:1.6px;height:9px;background:#111;"></div>
<div class="b" style="left:739.4200000000001px;top:76px;width:1.2px;height:26.5px;background:#3a3a3a;"></div>
<div class="b" style="left:741.0200000000001px;top:91px;width:6.4px;height:6.4px;background:#111;border-radius:50%;"></div>
<div class="b" style="left:734.22px;top:89.5px;width:1.6px;height:9px;background:#111;"></div>
<div class="b" style="left:757.7px;top:76px;width:1.2px;height:26.5px;background:#3a3a3a;"></div>
<div class="b" style="left:759.3000000000001px;top:91px;width:6.4px;height:6.4px;background:#111;border-radius:50%;"></div>
<div class="b" style="left:752.5px;top:89.5px;width:1.6px;height:9px;background:#111;"></div>
<div class="b" style="left:702.8600000000001px;top:104.5px;width:1.2px;height:22.5px;background:#3a3a3a;"></div>
<div class="b" style="left:704.4600000000002px;top:120px;width:6.4px;height:6.4px;border-radius:50%;border:1.200px solid #1a1a1a;"></div>
<div class="b" style="left:697.6600000000001px;top:118px;width:1.6px;height:9px;background:#111;"></div>
<div class="b" style="left:721.1400000000001px;top:104.5px;width:1.2px;height:22.5px;background:#3a3a3a;"></div>
<div class="b" style="left:722.7400000000001px;top:120px;width:6.4px;height:6.4px;border-radius:50%;border:1.200px solid #1a1a1a;"></div>
<div class="b" style="left:715.94px;top:118px;width:1.6px;height:9px;background:#111;"></div>
<div class="b" style="left:757.7px;top:104.5px;width:1.2px;height:22.5px;background:#3a3a3a;"></div>
<div class="b" style="left:759.3000000000001px;top:120px;width:6.4px;height:6.4px;border-radius:50%;border:1.200px solid #1a1a1a;"></div>
<div class="b" style="left:752.5px;top:118px;width:1.6px;height:9px;background:#111;"></div>
</div>
<div class="b" style="left:1583.5px;top:1188px;width:5px;height:27px;background:#707070;border-radius:2.500px;"></div>
<div class="b" style="left:499px;top:1267px;width:134px;height:5px;background:#707070;border-radius:2.500px;"></div>
<svg class="a" style="left:1143.4px;top:1132px" width="12" height="130" viewBox="0 0 12 130"><path d="M1 0.500h8.600v41l-4.300 5-4.300-5z" fill="#4a7fd6" stroke="#3a69b8" stroke-width="0.600"/><path d="M5.300 46v82" stroke="#4a86e8" stroke-width="1.400"/></svg>
<!-- p_props -->
<div class="b" style="left:1946px;top:88px;width:4px;height:1192px;background:#262626;"></div>
<div class="b" style="left:1599px;top:87.5px;width:347px;height:1px;background:#282828;"></div>
<div class="b" style="left:1675.5px;top:88.5px;width:270.5px;height:19.5px;background:#2c2c2c;"></div>
<div class="b" style="left:1675.5px;top:88.5px;width:1px;height:19.5px;background:#282828;"></div>
<div class="b" style="left:1733px;top:88.5px;width:1px;height:19.5px;background:#282828;"></div>
<div class="b" style="left:1789px;top:88.5px;width:1px;height:19.5px;background:#282828;"></div>
<div class="b" style="left:1675.5px;top:107.5px;width:270.5px;height:1px;background:#282828;"></div>
<span class="t" style="left:1607.0px;top:91.8px;font-size:11.5px;line-height:11.5px;color:#f2f2f2;letter-spacing:0.31px;font-weight:bold;">Properties</span>
<span class="t" style="left:1683.5px;top:91.8px;font-size:11.5px;line-height:11.5px;color:#8c8c8c;letter-spacing:0.29px;font-weight:bold;">Library</span>
<span class="t" style="left:1741.5px;top:91.8px;font-size:11.5px;line-height:11.5px;color:#8c8c8c;letter-spacing:0.13px;font-weight:bold;">Assets</span>
<div class="b" style="left:1855px;top:121px;width:83px;height:36px;background:#484848;border-radius:5px;"></div>
<div class="b" style="left:1688px;top:123px;width:1px;height:33px;background:#464646;"></div>
<div class="b" style="left:1771.5px;top:123px;width:1px;height:33px;background:#464646;"></div>
<div class="b" style="left:1854.5px;top:123px;width:1px;height:33px;background:#464646;"></div>
<span class="t" style="left:1632.8px;top:131.9px;font-size:15.5px;line-height:15.5px;color:#8e8e8e;letter-spacing:-0.23px;-webkit-text-stroke:0.250px;">Tool</span>
<span class="t" style="left:1708.5px;top:131.9px;font-size:15.5px;line-height:15.5px;color:#8e8e8e;letter-spacing:-0.30px;-webkit-text-stroke:0.250px;">Object</span>
<span class="t" style="left:1793.2px;top:131.9px;font-size:15.5px;line-height:15.5px;color:#8e8e8e;letter-spacing:-0.86px;-webkit-text-stroke:0.250px;">Frame</span>
<span class="t" style="left:1884.0px;top:131.9px;font-size:15.5px;line-height:15.5px;color:#f4f4f4;letter-spacing:-0.52px;-webkit-text-stroke:0.250px;">Doc</span>
<div class="b" style="left:1599px;top:164px;width:347px;height:3px;background:#282828;"></div>
<div class="b" style="left:1599px;top:254.5px;width:347px;height:3px;background:#282828;"></div>
<div class="b" style="left:1599px;top:311.8px;width:347px;height:3px;background:#282828;"></div>
<div class="b" style="left:1599px;top:478px;width:347px;height:3px;background:#282828;"></div>
<div class="b" style="left:1599px;top:782.5px;width:347px;height:3px;background:#282828;"></div>
<div class="b" style="left:1599px;top:831px;width:347px;height:3px;background:#282828;"></div>
<div class="b" style="left:1599px;top:879px;width:347px;height:3px;background:#282828;"></div>
<div class="b" style="left:1631px;top:185.5px;width:18.5px;height:16.5px;border:1.200px solid #d0d0d0;"></div>
<span class="t" style="left:1634.0px;top:189.0px;font-size:11px;line-height:11px;color:#d8d8d8;letter-spacing:-0.48px;">An</span>
<span class="t" style="left:1681.4px;top:187.2px;font-size:15.3px;line-height:15.3px;color:#c6c6c6;letter-spacing:-0.23px;-webkit-text-stroke:0.250px;">Boarding-School_animation_Moti...</span>
<span class="t" style="left:1681.4px;top:226.6px;font-size:15.3px;line-height:15.3px;color:#c0c0c0;letter-spacing:-0.72px;-webkit-text-stroke:0.250px;font-style:italic;">Document</span>
<div class="b" style="left:1622px;top:266.5px;width:40.5px;height:36px;background:#2a2a2a;border:1px solid #484848;border-radius:4px;"></div>
<div class="b" style="left:1677px;top:266.5px;width:36px;height:36px;background:#2a2a2a;border:1px solid #484848;border-radius:4px;"></div>
<div class="b" style="left:1727px;top:266.5px;width:36.5px;height:36px;background:#3e3e3e;border:1px solid #484848;border-radius:4px;"></div>
<div class="b" style="left:1777px;top:266.5px;width:36.5px;height:36px;background:#2a2a2a;border:1px solid #484848;border-radius:4px;"></div>
<svg class="a" style="left:1620px;top:264px" width="200" height="42" viewBox="1620 264 200 42" fill="none" stroke="#c4c4c4" stroke-linejoin="round">
<path d="M1637.200 292.500v-9a5.300 5.300 0 0 1 10.600 0v9" stroke-width="4.200" stroke="#cfcfcf"/><path d="M1635.100 290.800h4.200M1645.700 290.800h4.200" stroke="#8c8c8c" stroke-width="3.400"/>
<path d="M1689.500 275.500v18.500M1686 280.500h18" stroke-width="1.300"/><path d="M1693.500 276.500l-4 4 4 4" stroke-width="1.200"/><path d="M1696 287h5.500a3 3 0 0 1 0 6h-5.500" stroke-width="2.200" stroke-dasharray="3 1.500"/>
<path d="M1736 275.500h18.500v4.500h-14v14h-4.500z" fill="#f2f2f2" stroke="none"/><path d="M1742 277.700h11M1738.200 282h0.010M1738.200 285.500h0.010M1738.200 289h0.010" stroke="#3e3e3e" stroke-width="1.300" stroke-dasharray="1.200 2"/>
<path d="M1791.500 283.500v-3.500a4 4 0 0 1 8 0v3.500" stroke-width="2.200" stroke="#d0d0d0"/><rect x="1788.500" y="283.500" width="14" height="10.500" rx="1" fill="#d0d0d0" stroke="none"/><circle cx="1795.500" cy="287.500" r="1.600" fill="#2a2a2a" stroke="none"/><path d="M1795.500 288v3" stroke="#2a2a2a" stroke-width="1.600"/>
</svg>
<span class="t" style="left:1645.0px;top:329.6px;font-size:15px;line-height:15px;color:#dedede;letter-spacing:-0.51px;font-weight:bold;">Publish Settings</span>
<span class="t" style="left:1645.0px;top:496.8px;font-size:15px;line-height:15px;color:#dedede;letter-spacing:-0.45px;font-weight:bold;">Document Settings</span>
<span class="t" style="left:1645.0px;top:801.1px;font-size:15px;line-height:15px;color:#dedede;letter-spacing:-0.56px;font-weight:bold;">SWF History</span>
<span class="t" style="left:1645.0px;top:848.8px;font-size:15px;line-height:15px;color:#dedede;letter-spacing:-0.55px;font-weight:bold;">Accessibility</span>
<span class="t" style="left:1622.0px;top:381.0px;font-size:13px;line-height:13px;color:#a8a8a8;letter-spacing:-0.19px;-webkit-text-stroke:0.250px;">Profile</span>
<div class="b" style="left:1670px;top:369px;width:253px;height:37px;background:#262626;border:1px solid #484848;border-radius:4px;"></div>
<span class="t" style="left:1684.0px;top:380.0px;font-size:15.3px;line-height:15.3px;color:#ececec;letter-spacing:-0.21px;-webkit-text-stroke:0.250px;">Default</span>
<div class="b" style="left:1622px;top:424.2px;width:301px;height:36.5px;background:#2a2a2a;border:1px solid #484848;border-radius:4px;"></div>
<span class="t" style="left:1728.5px;top:434.5px;font-size:15.3px;line-height:15.3px;color:#e4e4e4;letter-spacing:-0.30px;-webkit-text-stroke:0.250px;">More settings</span>
<span class="t" style="left:1621.6px;top:548.2px;font-size:13px;line-height:13px;color:#a8a8a8;-webkit-text-stroke:0.250px;">W</span>
<span class="t" style="left:1646.0px;top:547.0px;font-size:15px;line-height:15px;color:#e4e4e4;letter-spacing:-0.22px;-webkit-text-stroke:0.250px;">1080</span>
<div class="b" style="left:1646px;top:571.3px;width:48px;height:1px;background:#505050;"></div>
<span class="t" style="left:1622.0px;top:603.0px;font-size:13px;line-height:13px;color:#a8a8a8;-webkit-text-stroke:0.250px;">H</span>
<span class="t" style="left:1642.5px;top:601.9px;font-size:15px;line-height:15px;color:#e4e4e4;letter-spacing:-0.34px;-webkit-text-stroke:0.250px;">1920</span>
<div class="b" style="left:1642.5px;top:626.3px;width:48px;height:1px;background:#505050;"></div>
<div class="b" style="left:1753.5px;top:538.5px;width:169.5px;height:36px;background:#2a2a2a;border:1px solid #484848;border-radius:4px;"></div>
<span class="t" style="left:1787.8px;top:549.0px;font-size:15.3px;line-height:15.3px;color:#e4e4e4;letter-spacing:-0.20px;-webkit-text-stroke:0.250px;">Match contents</span>
<div class="b" style="left:1754px;top:604.5px;width:15px;height:15px;background:#2c2c2c;border:1.800px solid #a0a0a0;border-radius:2.500px;"></div>
<div class="b" style="left:1754px;top:645.7px;width:15px;height:15px;background:#2c2c2c;border:1.800px solid #a0a0a0;border-radius:2.500px;"></div>
<div class="b" style="left:1754px;top:687px;width:15px;height:15px;background:#2c2c2c;border:1.800px solid #a0a0a0;border-radius:2.500px;"></div>
<span class="t" style="left:1780.8px;top:604.3px;font-size:15px;line-height:15px;color:#e4e4e4;letter-spacing:-0.36px;-webkit-text-stroke:0.250px;">Scale Content</span>
<span class="t" style="left:1780.8px;top:645.7px;font-size:15px;line-height:15px;color:#e4e4e4;letter-spacing:-0.10px;-webkit-text-stroke:0.250px;">Apply to pasteboard</span>
<span class="t" style="left:1780.8px;top:686.9px;font-size:15px;line-height:15px;color:#e4e4e4;letter-spacing:-0.70px;-webkit-text-stroke:0.250px;">Scale Spans</span>
<span class="t" style="left:1622.0px;top:644.3px;font-size:13px;line-height:13px;color:#a8a8a8;letter-spacing:-0.79px;-webkit-text-stroke:0.250px;">Stage</span>
<div class="b" style="left:1675.5px;top:636.7px;width:55px;height:27.3px;background:#cb99f7;border-radius:3.500px;"></div>
<span class="t" style="left:1622.0px;top:685.7px;font-size:12.5px;line-height:12.5px;color:#a8a8a8;letter-spacing:-1.27px;-webkit-text-stroke:0.250px;">FPS</span>
<span class="t" style="left:1676.0px;top:684.3px;font-size:15px;line-height:15px;color:#e4e4e4;letter-spacing:-0.34px;-webkit-text-stroke:0.250px;">25</span>
<div class="b" style="left:1676px;top:709px;width:48px;height:1px;background:#505050;"></div>
<div class="b" style="left:1622px;top:728px;width:301px;height:36px;background:#2a2a2a;border:1px solid #484848;border-radius:4px;"></div>
<span class="t" style="left:1728.5px;top:738.3px;font-size:15.3px;line-height:15.3px;color:#e4e4e4;letter-spacing:-0.30px;-webkit-text-stroke:0.250px;">More settings</span>
<svg class="a" style="left:1599px;top:320px" width="347" height="560" viewBox="1599 320 347 560"><path d="M1622.5 335.0l4.500 4.500 4.500-4.500" fill="none" stroke="#e4e4e4" stroke-width="2" stroke-linecap="round" stroke-linejoin="round"/><path d="M1622.5 502.0l4.500 4.500 4.500-4.500" fill="none" stroke="#e4e4e4" stroke-width="2" stroke-linecap="round" stroke-linejoin="round"/><path d="M1622.3 802.5l4.500 4.500-4.500 4.500" fill="none" stroke="#e4e4e4" stroke-width="2" stroke-linecap="round" stroke-linejoin="round"/><path d="M1622.3 851.0l4.500 4.500-4.500 4.500" fill="none" stroke="#e4e4e4" stroke-width="2" stroke-linecap="round" stroke-linejoin="round"/><path d="M1898 384.500l5 5 5-5" fill="none" stroke="#f0f0f0" stroke-width="2" stroke-linecap="round" stroke-linejoin="round"/><path d="M1696.500 556.500h10.500v14M1707 590.500v17h-10.500" fill="none" stroke="#6a6a6a" stroke-width="1.100"/><rect x="1703.500" y="579.500" width="9.500" height="8" rx="1" fill="#9a9a9a"/><path d="M1705.800 579.500v-2.500a2.500 2.500 0 0 1 5 0v0.800" fill="none" stroke="#9a9a9a" stroke-width="1.300"/><rect x="1707.500" y="582" width="1.800" height="3" fill="#323232"/><rect x="1912" y="844" width="29.500" height="15.500" rx="7.750" fill="#b8b8b8"/><circle cx="1933.700" cy="851.750" r="5.800" fill="#2e2e2e"/></svg>
<!-- p_strip -->
<div class="b" style="left:1950px;top:75px;width:43px;height:1205px;background:#333333;"></div>
<div class="b" style="left:1950px;top:87.5px;width:43px;height:1.5px;background:#282828;"></div>
<div class="b" style="left:1950px;top:135.0px;width:43px;height:2px;background:#282828;"></div>
<div class="b" style="left:1950px;top:181.8px;width:43px;height:2px;background:#282828;"></div>
<div class="b" style="left:1950px;top:228.6px;width:43px;height:2px;background:#282828;"></div>
<div class="b" style="left:1950px;top:275.4px;width:43px;height:2px;background:#282828;"></div>
<div class="b" style="left:1950px;top:322.2px;width:43px;height:2px;background:#282828;"></div>
<div class="b" style="left:1950px;top:369.0px;width:43px;height:2px;background:#282828;"></div>
<div class="b" style="left:1950px;top:415.8px;width:43px;height:2px;background:#282828;"></div>
<div class="b" style="left:1950px;top:462.6px;width:43px;height:2px;background:#282828;"></div>
<div class="b" style="left:1950px;top:509.4px;width:43px;height:2px;background:#282828;"></div>
<div class="b" style="left:1960px;top:92.7px;width:22px;height:4px;background-image:repeating-linear-gradient(90deg,#4c4c4c 0,#4c4c4c 1px,transparent 1px,transparent 2px);"></div>
<div class="b" style="left:1960px;top:139.5px;width:22px;height:4px;background-image:repeating-linear-gradient(90deg,#4c4c4c 0,#4c4c4c 1px,transparent 1px,transparent 2px);"></div>
<div class="b" style="left:1960px;top:186.3px;width:22px;height:4px;background-image:repeating-linear-gradient(90deg,#4c4c4c 0,#4c4c4c 1px,transparent 1px,transparent 2px);"></div>
<div class="b" style="left:1960px;top:233.1px;width:22px;height:4px;background-image:repeating-linear-gradient(90deg,#4c4c4c 0,#4c4c4c 1px,transparent 1px,transparent 2px);"></div>
<div class="b" style="left:1960px;top:279.9px;width:22px;height:4px;background-image:repeating-linear-gradient(90deg,#4c4c4c 0,#4c4c4c 1px,transparent 1px,transparent 2px);"></div>
<div class="b" style="left:1960px;top:326.7px;width:22px;height:4px;background-image:repeating-linear-gradient(90deg,#4c4c4c 0,#4c4c4c 1px,transparent 1px,transparent 2px);"></div>
<div class="b" style="left:1960px;top:373.5px;width:22px;height:4px;background-image:repeating-linear-gradient(90deg,#4c4c4c 0,#4c4c4c 1px,transparent 1px,transparent 2px);"></div>
<div class="b" style="left:1960px;top:420.3px;width:22px;height:4px;background-image:repeating-linear-gradient(90deg,#4c4c4c 0,#4c4c4c 1px,transparent 1px,transparent 2px);"></div>
<div class="b" style="left:1960px;top:467.1px;width:22px;height:4px;background-image:repeating-linear-gradient(90deg,#4c4c4c 0,#4c4c4c 1px,transparent 1px,transparent 2px);"></div>
<svg class="a" style="left:1950px;top:89px" width="43" height="425" viewBox="1950 89 43 425"><g transform="translate(1971 114.7)"><path d="M-11 1c0-6 6-9.500 13-9.500 6 0 10 3 10 6.500 0 3-3 4-5.500 4-2 0-2.500 1.500-1.500 3 1 2-1 3.500-4.500 3.500-7 0-11.500-3-11.500-7.500z" fill="#c6c6c6"/><g fill="#333"><circle cx="-6.500" cy="2" r="1.700"/><circle cx="-3" cy="-3" r="1.700"/><circle cx="3" cy="-4.500" r="1.700"/><circle cx="-1.500" cy="5" r="1.700"/><circle cx="7.500" cy="-1.500" r="1.700"/></g></g><g transform="translate(1971 161.5)"><rect x="-9.500" y="-6.500" width="19" height="13" fill="#c6c6c6"/><g fill="#777"><rect x="-8" y="-5" width="4.500" height="4.500"/><rect x="3.500" y="-5" width="4.500" height="4.500"/><rect x="-2.200" y="0.500" width="4.500" height="4.500"/><rect x="-8" y="0.500" width="4.500" height="4.500" fill="#999"/><rect x="3.500" y="0.500" width="4.500" height="4.500" fill="#999"/></g></g><g transform="translate(1971 208.3)"><rect x="-6.500" y="-6.500" width="13" height="13" fill="none" stroke="#c6c6c6" stroke-width="1.200"/><g fill="#c6c6c6"><rect x="-9" y="-9" width="4.500" height="4.500"/><rect x="4.500" y="-9" width="4.500" height="4.500"/><rect x="-9" y="4.500" width="4.500" height="4.500"/><rect x="4.500" y="4.500" width="4.500" height="4.500"/><rect x="-1.500" y="-8.500" width="3" height="3"/><rect x="-1.500" y="5.500" width="3" height="3"/><rect x="-8.500" y="-1.500" width="3" height="3"/><rect x="5.500" y="-1.500" width="3" height="3"/><rect x="-0.800" y="-0.800" width="1.600" height="1.600"/></g></g><g transform="translate(1971 255.1)"><path d="M-8 -10v20" stroke="#c6c6c6" stroke-width="1.500"/><rect x="-5.500" y="-6.500" width="9" height="5.500" fill="#c6c6c6"/><rect x="-5.500" y="1" width="15" height="5.500" fill="#c6c6c6"/></g><g transform="translate(1971 301.9)"><circle r="9.300" fill="#c6c6c6"/><circle cx="0" cy="-4.800" r="1.700" fill="#333"/><path d="M-2.800 -1.500h4.300v6h2v1.800h-6.500v-1.800h2v-4.200h-1.800z" fill="#333"/></g><g transform="translate(1971 348.7)"><circle cx="-6" cy="5" r="4.500" fill="#c6c6c6"/><circle cx="3.500" cy="-1" r="3.300" fill="#c6c6c6"/><circle cx="6.500" cy="-8.500" r="2.300" fill="#c6c6c6"/></g><g transform="translate(1971 395.5)"><rect x="-6" y="1.500" width="12" height="8.500" rx="1" fill="#c6c6c6"/><path d="M0 2v-11M-3 2l-4-8M3 2l4-7" stroke="#c6c6c6" stroke-width="1.600"/><path d="M-1.500 -8l1.500-3 1.500 3zM-9.500 -5c1-2.500 3.500-3 5-2l-2 3zM4.500 -7.500c2-1.500 4.500-1 5.500 1l-3.500 2z" fill="#c6c6c6"/></g><g transform="translate(1971 442.3)"><path d="M-8.500 -9v17.500h18" fill="none" stroke="#c6c6c6" stroke-width="1.800"/><path d="M-5 5l9-7.500" stroke="#c6c6c6" stroke-width="2.200"/><path d="M7 -6l-7 0.800 5.300 5.800z" fill="#c6c6c6"/></g><g transform="translate(1971 489.1)"><g fill="#c6c6c6"><rect x="-10" y="-10" width="5" height="8"/><rect x="-2.500" y="-10" width="5" height="8"/><rect x="5" y="-10" width="5" height="8"/><rect x="-10" y="2" width="8" height="8" fill="none" stroke="#c6c6c6" stroke-width="1.200"/><rect x="-2" y="2.500" width="12" height="7"/></g><g fill="#333"><rect x="-8.500" y="-6.500" width="2" height="2"/><rect x="-1" y="-6.500" width="2" height="2"/><rect x="6.500" y="-6.500" width="2" height="2"/></g><path d="M-0.500 8.500h9" stroke="#333" stroke-width="1.200" stroke-dasharray="1.200 1"/><path d="M-7 8l8-8" stroke="#c6c6c6" stroke-width="1.500"/></g></svg>
<svg class="a" style="left:1920px;top:76px" width="75" height="30" viewBox="1920 76 75 30" fill="none" stroke="#d0d0d0" stroke-width="1.300">
<path d="M1932 78.500l3 3-3 3M1936 78.500l3 3-3 3M1982 78.500l-3 3 3 3M1986 78.500l-3 3 3 3"/>
<path d="M1929 94.500h12M1929 96.500h12M1929 98.500h12M1929 101.500h12" stroke="#a6a6a6" stroke-width="1" shape-rendering="crispEdges"/>
</svg>
<!-- p_dock -->
<div class="b" style="left:1997.5px;top:51.3px;width:44.5px;height:1204.5px;background:#898989;border-radius:9px;box-shadow:0 0 2px rgba(0,0,0,0.350);"></div>
<svg class="a" style="left:1996px;top:50px" width="52" height="1210" viewBox="1996 50 52 1210"><defs><linearGradient id="fg" x1="0" y1="0" x2="0" y2="1"><stop offset="0" stop-color="#5cb8f2"/><stop offset="1" stop-color="#2467dc"/></linearGradient></defs><rect x="2005.5" y="58.7" width="26" height="26" rx="6" fill="url(#fg)" /><path d="M2019.5 58.7h6a6 6 0 0 1 6 6v14a6 6 0 0 1-6 6h-8c1-4 1.500-7 1.500-10h-3.500c0-6 1.500-11 4-16z" fill="#e9eef5"/><path d="M2012.5 75.7c4 4 9 4 13 0" fill="none" stroke="#1c2a4a" stroke-width="1.400"/><path d="M2013.5 65.7v3.500M2024.5 65.7v3.500" stroke="#1c2a4a" stroke-width="1.500"/><rect x="2005.5" y="93.2" width="26" height="26" rx="6" fill="#fff" /><rect x="2014.5" y="97.2" width="13" height="17" rx="1.500" fill="#1b6fc8"/><rect x="2017.5" y="101.2" width="10" height="9" fill="#3f9be8"/><rect x="2008.5" y="100.2" width="12" height="12" rx="1.500" fill="#0e5bb0"/><circle cx="2014.5" cy="106.2" r="3" fill="none" stroke="#fff" stroke-width="1.500"/><rect x="2005.5" y="127.6" width="26" height="26" rx="6" fill="#d2d2d4" /><rect x="2009.0" y="131.1" width="5.400" height="5.400" rx="1.400" fill="#6fcf57"/><rect x="2015.8" y="131.1" width="5.400" height="5.400" rx="1.400" fill="#f5b63c"/><rect x="2022.6" y="131.1" width="5.400" height="5.400" rx="1.400" fill="#ee8a2e"/><rect x="2009.0" y="137.9" width="5.400" height="5.400" rx="1.400" fill="#e0453a"/><rect x="2015.8" y="137.9" width="5.400" height="5.400" rx="1.400" fill="#b5b5b9"/><rect x="2022.6" y="137.9" width="5.400" height="5.400" rx="1.400" fill="#ea5a6a"/><rect x="2009.0" y="144.7" width="5.400" height="5.400" rx="1.400" fill="#a55ad8"/><rect x="2015.8" y="144.7" width="5.400" height="5.400" rx="1.400" fill="#3f9cf0"/><rect x="2022.6" y="144.7" width="5.400" height="5.400" rx="1.400" fill="#57c3a0"/><rect x="2005.5" y="162.0" width="26" height="26" rx="6" fill="#2a7de8" /><path d="M2012.5 182l8-14.500M2024.5 182l-8-14.500M2009.0 178h19" stroke="#fff" stroke-width="2.200" stroke-linecap="round" fill="none"/><rect x="2002.500" y="193" width="32" height="32" fill="#fff"/><g fill="none" stroke="#5b92e0" stroke-width="1.500" stroke-linejoin="round"><path d="M2011.5 205v-5.500a2 2 0 0 1 2-2h9a2 2 0 0 1 2 2v5.500"/><path d="M2011.5 215h-2.500a2 2 0 0 1-2-2v-6a2.500 2.500 0 0 1 2.500-2.500h15.500a2.500 2.500 0 0 1 2.500 2.500v1"/><rect x="2012.0" y="209.5" width="13" height="11" rx="1.500"/><path d="M2015.0 213.5h6M2015.0 217h6"/><rect x="2023.5" y="210.5" width="7" height="11" rx="1.500" fill="#fff"/></g><rect x="2005.5" y="230.2" width="26" height="26" rx="6" fill="#fff" /><rect x="2014.5" y="234.2" width="13" height="18" rx="1.500" fill="#2b6fd0"/><rect x="2014.5" y="240.2" width="13" height="6" fill="#1d58b5"/><rect x="2014.5" y="246.2" width="13" height="6" rx="1" fill="#12408f"/><rect x="2008.5" y="237.2" width="12" height="12" rx="1.500" fill="#1a4fa8"/><rect x="2005.5" y="264.7" width="26" height="26" rx="6" fill="#f2f2f2" /><circle cx="2018.5" cy="277.7" r="10.500" fill="#e24a38"/><path d="M2018.5 277.7l-9.100 5.250a10.500 10.500 0 0 0 9.100 5.250l4.500-7.800z" fill="#3ca356"/><path d="M2018.5 277.7l4.500 2.700-4.500 7.800a10.500 10.500 0 0 0 9.100-15.750h-9.100z" fill="#f6c234"/><circle cx="2018.5" cy="277.7" r="5" fill="#fff"/><circle cx="2018.5" cy="277.7" r="3.900" fill="#3f82e8"/><circle cx="2018.5" cy="311.3" r="13.500" fill="#d8d8dc"/><circle cx="2017.5" cy="312.3" r="10.500" fill="#1d2550"/><circle cx="2015.0" cy="313.8" r="5" fill="#0c0f26"/><path d="M2010.5 307.3c4-5 12-6 17-1" stroke="#6a7fd0" stroke-width="1.500" fill="none"/><rect x="2005.5" y="332.5" width="26" height="26" rx="6" fill="#fff" /><g stroke-width="3.200" stroke-linecap="round"><path d="M2016.0 338.5v5" stroke="#36c5f0"/><path d="M2011.5 343.0h0.500" stroke="#36c5f0"/><path d="M2021.0 352.5v-5" stroke="#e01e5a"/><path d="M2025.5 348.0h-0.500" stroke="#e01e5a"/><path d="M2025.5 343.0h-5" stroke="#2eb67d"/><path d="M2021.0 338.5v0.500" stroke="#2eb67d"/><path d="M2011.5 348.0h5" stroke="#ecb22e"/><path d="M2016.0 352.5v-0.500" stroke="#ecb22e"/></g><rect x="2005.5" y="367.3" width="26" height="26" rx="6" fill="#2563e6" /><rect x="2005.5" y="402.0" width="26" height="26" rx="6" fill="#5cc65a" /><rect x="2010.0" y="410.5" width="11.500" height="9" rx="2" fill="#f2f2f2"/><path d="M2022.5 414l4.500-3v8l-4.500-3z" fill="#f2f2f2"/><rect x="2005.5" y="436.0" width="26" height="26" rx="6" fill="#f4f2ee" /><path d="M2005.5 445v-3a6 6 0 0 1 6-6h14a6 6 0 0 1 6 6v3z" fill="#f7c948"/><path d="M2008.5 450h20M2008.5 454.5h20" stroke="#d8d4cc" stroke-width="0.800" stroke-dasharray="1 1"/><rect x="2005.5" y="470.4" width="26" height="26" rx="6" fill="#58c452" /><path d="M2009.5 492.4l1.500-5a9 9 0 1 1 3.500 3.500z" fill="none" stroke="#fff" stroke-width="1.800" stroke-linejoin="round"/><path d="M2014.5 479.4c0 4 3 7 7 8l1.500-2-2.500-1.500-1 1c-1.500-0.500-2.500-1.500-3-3l1-1-1.500-2.500z" fill="#fff"/><rect x="2005.5" y="504.70000000000005" width="26" height="26" rx="6" fill="#9a9a9c" /><circle cx="2018.5" cy="517.7" r="10" fill="#4a4a4c" stroke="#2c2c2e" stroke-width="1"/><circle cx="2018.5" cy="517.7" r="6.500" fill="none" stroke="#8c8c8e" stroke-width="1.600"/><path d="M2018.5 517.7v-6.500M2018.5 517.7l5.600 3.300M2018.5 517.7l-5.600 3.300" stroke="#8c8c8e" stroke-width="1.400"/><circle cx="2018.5" cy="517.7" r="1.800" fill="#8c8c8e"/><rect x="2005.5" y="538.7" width="26" height="26" rx="6" fill="#9146d8" /><circle cx="2018.5" cy="549.7" r="8" fill="none" stroke="#fff" stroke-width="1.500"/><circle cx="2018.5" cy="549.7" r="4.500" fill="none" stroke="#fff" stroke-width="1.400"/><circle cx="2018.5" cy="549.7" r="2" fill="#fff"/><path d="M2017.0 553.7h3l-0.700 7.500h-1.600z" fill="#fff"/><rect x="2013.5" y="557.7" width="10" height="7" fill="#9146d8"/><path d="M2016.9 553.7h3.200l-0.800 8h-1.600z" fill="#fff"/><rect x="2005.5" y="573.5" width="26" height="26" rx="6" fill="#ee4a58" /><path d="M2015.0 591.5v-11.500l9.500-2.500v11.500" fill="none" stroke="#fff" stroke-width="2"/><ellipse cx="2012.7" cy="592.0" rx="3.200" ry="2.600" fill="#fff"/><ellipse cx="2022.2" cy="589.5" rx="3.200" ry="2.600" fill="#fff"/><path d="M2005.5 607h26v22h-8l-2.500 3.500h-5l-2.500-3.500h-8z" fill="#f2b544"/><path d="M2021.5 614c-2-3-7-2-7 1s7 3 7 6.500-6 4.500-8 1M2016.5 611c6-1 7 4 4 7.500" fill="none" stroke="#fff" stroke-width="1.500"/><path d="M2003.500 645.800h34M2003.500 970.700h34" stroke="#6c6c6c" stroke-width="1"/><rect x="2005.5" y="658.0" width="26" height="26" rx="6" fill="#b3261e" /><path d="M2011.5 677c5-3 8-10 7-14-1-2-3 0-2 3 2 6 6 9 10 9 2-1 0-3-4-2-4 1-8 3-11 4z" fill="none" stroke="#fff" stroke-width="1.500" stroke-linejoin="round"/><rect x="2005.5" y="692.0" width="26" height="26" rx="6" fill="#3e9af2" /><rect x="2009.0" y="699" width="19" height="12.500" rx="1.500" fill="#f2f4f8"/><path d="M2009.5 699.5l9 7 9-7" fill="none" stroke="#b9c2d0" stroke-width="1.100"/><circle cx="2018.5" cy="739.6" r="15.500" fill="#fff"/><path d="M2011.5 735.6v5a3.500 3.500 0 0 0 7 0v-5M2018.5 735.6v5a3.500 3.500 0 0 0 7 0v-5" fill="none" stroke="#3f8ee8" stroke-width="2.200"/><rect x="2003.500" y="758.500" width="30" height="29.500" fill="#5a120c"/><path d="M2024.5 764.8c-6 0-8 3-9.500 7.500h4.500v3h-5.500c-1.500 4-3 6.500-7 6.500v-3c2 0 3-2 4.500-6 2-6 5-11 13-11z" fill="#fff"/><defs><linearGradient id="ccg" x1="0" y1="0" x2="1" y2="1"><stop offset="0" stop-color="#f04a5a"/><stop offset="0.350" stop-color="#f59a3a"/><stop offset="0.600" stop-color="#e8e04a"/><stop offset="0.800" stop-color="#58c86a"/><stop offset="1" stop-color="#4a7af0"/></linearGradient></defs><rect x="2005.5" y="794.9" width="26" height="26" rx="6" fill="url(#ccg)" /><path d="M2005.5 805.9c0-6 5-11 12-11h2c7 0 12 5 12 11z" fill="#e8509a" opacity="0.550"/><circle cx="2015.5" cy="808.9" r="5" fill="none" stroke="#fff" stroke-width="1.800"/><circle cx="2022.0" cy="807.9" r="6" fill="none" stroke="#fff" stroke-width="1.800"/><rect x="2005.5" y="829.4" width="26" height="26" rx="6" fill="#1c2340" /><rect x="2005.5" y="863.4" width="26" height="26" rx="6" fill="#0b0b6e" /><rect x="2005.5" y="898.0" width="26" height="26" rx="6" fill="#2a2a2c" /><circle cx="2018.5" cy="910" r="9.500" fill="#b8bcc4"/><circle cx="2018.5" cy="910" r="6.500" fill="#3f8ef0"/><path d="M2021.5 914l6 7" stroke="#b8bcc4" stroke-width="3.500"/><path d="M2015.0 907c3-2.500 7-1 7 3" stroke="#bfe0ff" stroke-width="1.500" fill="none"/><rect x="2005.5" y="932.4" width="26" height="26" rx="6" fill="#0b0b6e" /><rect x="2003.500" y="985.500" width="29.500" height="22.500" fill="#262626" stroke="#aaa" stroke-width="0.600"/><rect x="2011" y="989" width="13" height="15" fill="#fff"/><rect x="2016" y="992" width="3" height="9" fill="#8a5ad0"/><rect x="2023.5" y="1000" width="9.500" height="9.500" rx="2" fill="#1c2340"/><rect x="2003.500" y="1021" width="29.500" height="21.500" fill="#ececec"/><path d="M2005 1026h26M2005 1030h14M2005 1034h20" stroke="#d2d2d2" stroke-width="1"/><rect x="2023.5" y="1034.5" width="9.500" height="9.500" rx="2" fill="#58c452"/><rect x="2003.500" y="1053.500" width="29.500" height="23.500" fill="#fcfcfd"/><rect x="2003.500" y="1053.500" width="29.500" height="1.500" fill="#4a86e8"/><rect x="2003.500" y="1055" width="7" height="22" fill="#e8edf5"/><rect x="2012" y="1062" width="2.500" height="2.500" fill="#4a86e8"/><path d="M2019 1056v20" stroke="#dde3ec" stroke-width="0.800"/><rect x="2023.5" y="1069" width="9.500" height="9.500" rx="2" fill="#1b6fc8"/><rect x="2008" y="1083.500" width="21" height="29.500" fill="#fdfdfd" stroke="#c4c4c4" stroke-width="0.600"/><path d="M2011 1088h15M2011 1091h15M2011 1094h15M2011 1097h15M2011 1100h15M2011 1103h11" stroke="#c8c8c8" stroke-width="0.900"/><rect x="2023.5" y="1103.5" width="9.500" height="9.500" rx="2" fill="#1a4fa8"/><rect x="2003.500" y="1123" width="29.500" height="22.500" fill="#fafafa"/><rect x="2003.500" y="1123" width="29.500" height="3.500" fill="#1a1a1a"/><path d="M2005 1130h26M2007 1135h12M2007 1139h9" stroke="#d8d8d8" stroke-width="1"/><circle cx="2028.500" cy="1141.500" r="4.800" fill="#e24a38"/><circle cx="2028.500" cy="1141.500" r="2" fill="#3f82e8" stroke="#fff" stroke-width="0.800"/><rect x="2003.500" y="1157.500" width="29.500" height="22.500" fill="#1c1c1e"/><rect x="2015.500" y="1160" width="5" height="7" fill="#b58ae8"/><path d="M2005 1172h26M2005 1175h26" stroke="#333" stroke-width="1"/><rect x="2023.5" y="1172" width="9.500" height="9.500" rx="2" fill="#0b0b6e"/><rect x="2003.500" y="1192" width="29.500" height="22.500" fill="#fcfcfc"/><rect x="2009" y="1194.500" width="22" height="5" fill="#1a1a2a"/><path d="M2005 1203h26M2005 1207h26M2005 1211h18" stroke="#ddd" stroke-width="1"/><rect x="2023.5" y="1206.5" width="9.500" height="9.500" rx="2" fill="url(#ccg)"/><path d="M2007.500 1223.500c0-2 4.500-3.500 11-3.500s11 1.500 11 3.500l-2.500 23c0 1.800-3.500 3-8.500 3s-8.500-1.200-8.500-3z" fill="#d9d9dc" stroke="#b4b4b8" stroke-width="0.800"/><ellipse cx="2018.500" cy="1223.500" rx="10.500" ry="3" fill="#bcbcc0" stroke="#a8a8ac" stroke-width="0.600"/><path d="M2012.500 1229l1.500 17M2018.500 1229.500v17M2024.500 1229l-1.500 17" stroke="#c4c4c8" stroke-width="1"/><path d="M2012 1223l3-1.500 2.500 1.500 3-1.200 3 1.500" stroke="#8a8a8e" stroke-width="1" fill="none"/><circle cx="2037" cy="71.7" r="1.500" fill="#0a0a0a"/><circle cx="2037" cy="106.2" r="1.500" fill="#0a0a0a"/><circle cx="2037" cy="243.2" r="1.500" fill="#0a0a0a"/><circle cx="2037" cy="277.7" r="1.500" fill="#0a0a0a"/><circle cx="2037" cy="449" r="1.500" fill="#0a0a0a"/><circle cx="2037" cy="483.4" r="1.500" fill="#0a0a0a"/><circle cx="2037" cy="586.5" r="1.500" fill="#0a0a0a"/><circle cx="2037" cy="671" r="1.500" fill="#0a0a0a"/><circle cx="2037" cy="705" r="1.500" fill="#0a0a0a"/><circle cx="2037" cy="739.6" r="1.500" fill="#0a0a0a"/><circle cx="2037" cy="773.3" r="1.500" fill="#0a0a0a"/><circle cx="2037" cy="807.9" r="1.500" fill="#0a0a0a"/><circle cx="2037" cy="842.4" r="1.500" fill="#0a0a0a"/><circle cx="2037" cy="876.4" r="1.500" fill="#0a0a0a"/><circle cx="2037" cy="911" r="1.500" fill="#0a0a0a"/><circle cx="2037" cy="945.4" r="1.500" fill="#0a0a0a"/></svg>
<span class="t" style="left:2009.0px;top:375.6px;font-size:8.5px;line-height:8.5px;color:#fff;letter-spacing:-0.80px;font-weight:bold;">zoom</span>
<span class="t" style="left:2009.0px;top:834.9px;font-size:15.5px;line-height:15.5px;color:#5aa8f8;letter-spacing:0.02px;font-weight:bold;">Ps</span>
<span class="t" style="left:2008.0px;top:868.9px;font-size:15.5px;line-height:15.5px;color:#a8a8f4;letter-spacing:0.17px;font-weight:bold;">An</span>
<span class="t" style="left:2010.0px;top:937.9px;font-size:15.5px;line-height:15.5px;color:#a8a8f4;letter-spacing:0.31px;font-weight:bold;">Pr</span>
<span class="t" style="left:2010.5px;top:239.8px;font-size:8.5px;line-height:8.5px;color:#fff;font-weight:bold;">W</span>
<span class="t" style="left:2024.2px;top:1002.5px;font-size:6.5px;line-height:6.5px;color:#5aa8f8;font-weight:bold;">Ps</span>
<span class="t" style="left:2024.8px;top:1174.5px;font-size:6.5px;line-height:6.5px;color:#a8a8f4;font-weight:bold;">Pr</span>
</div>
</body></html>
